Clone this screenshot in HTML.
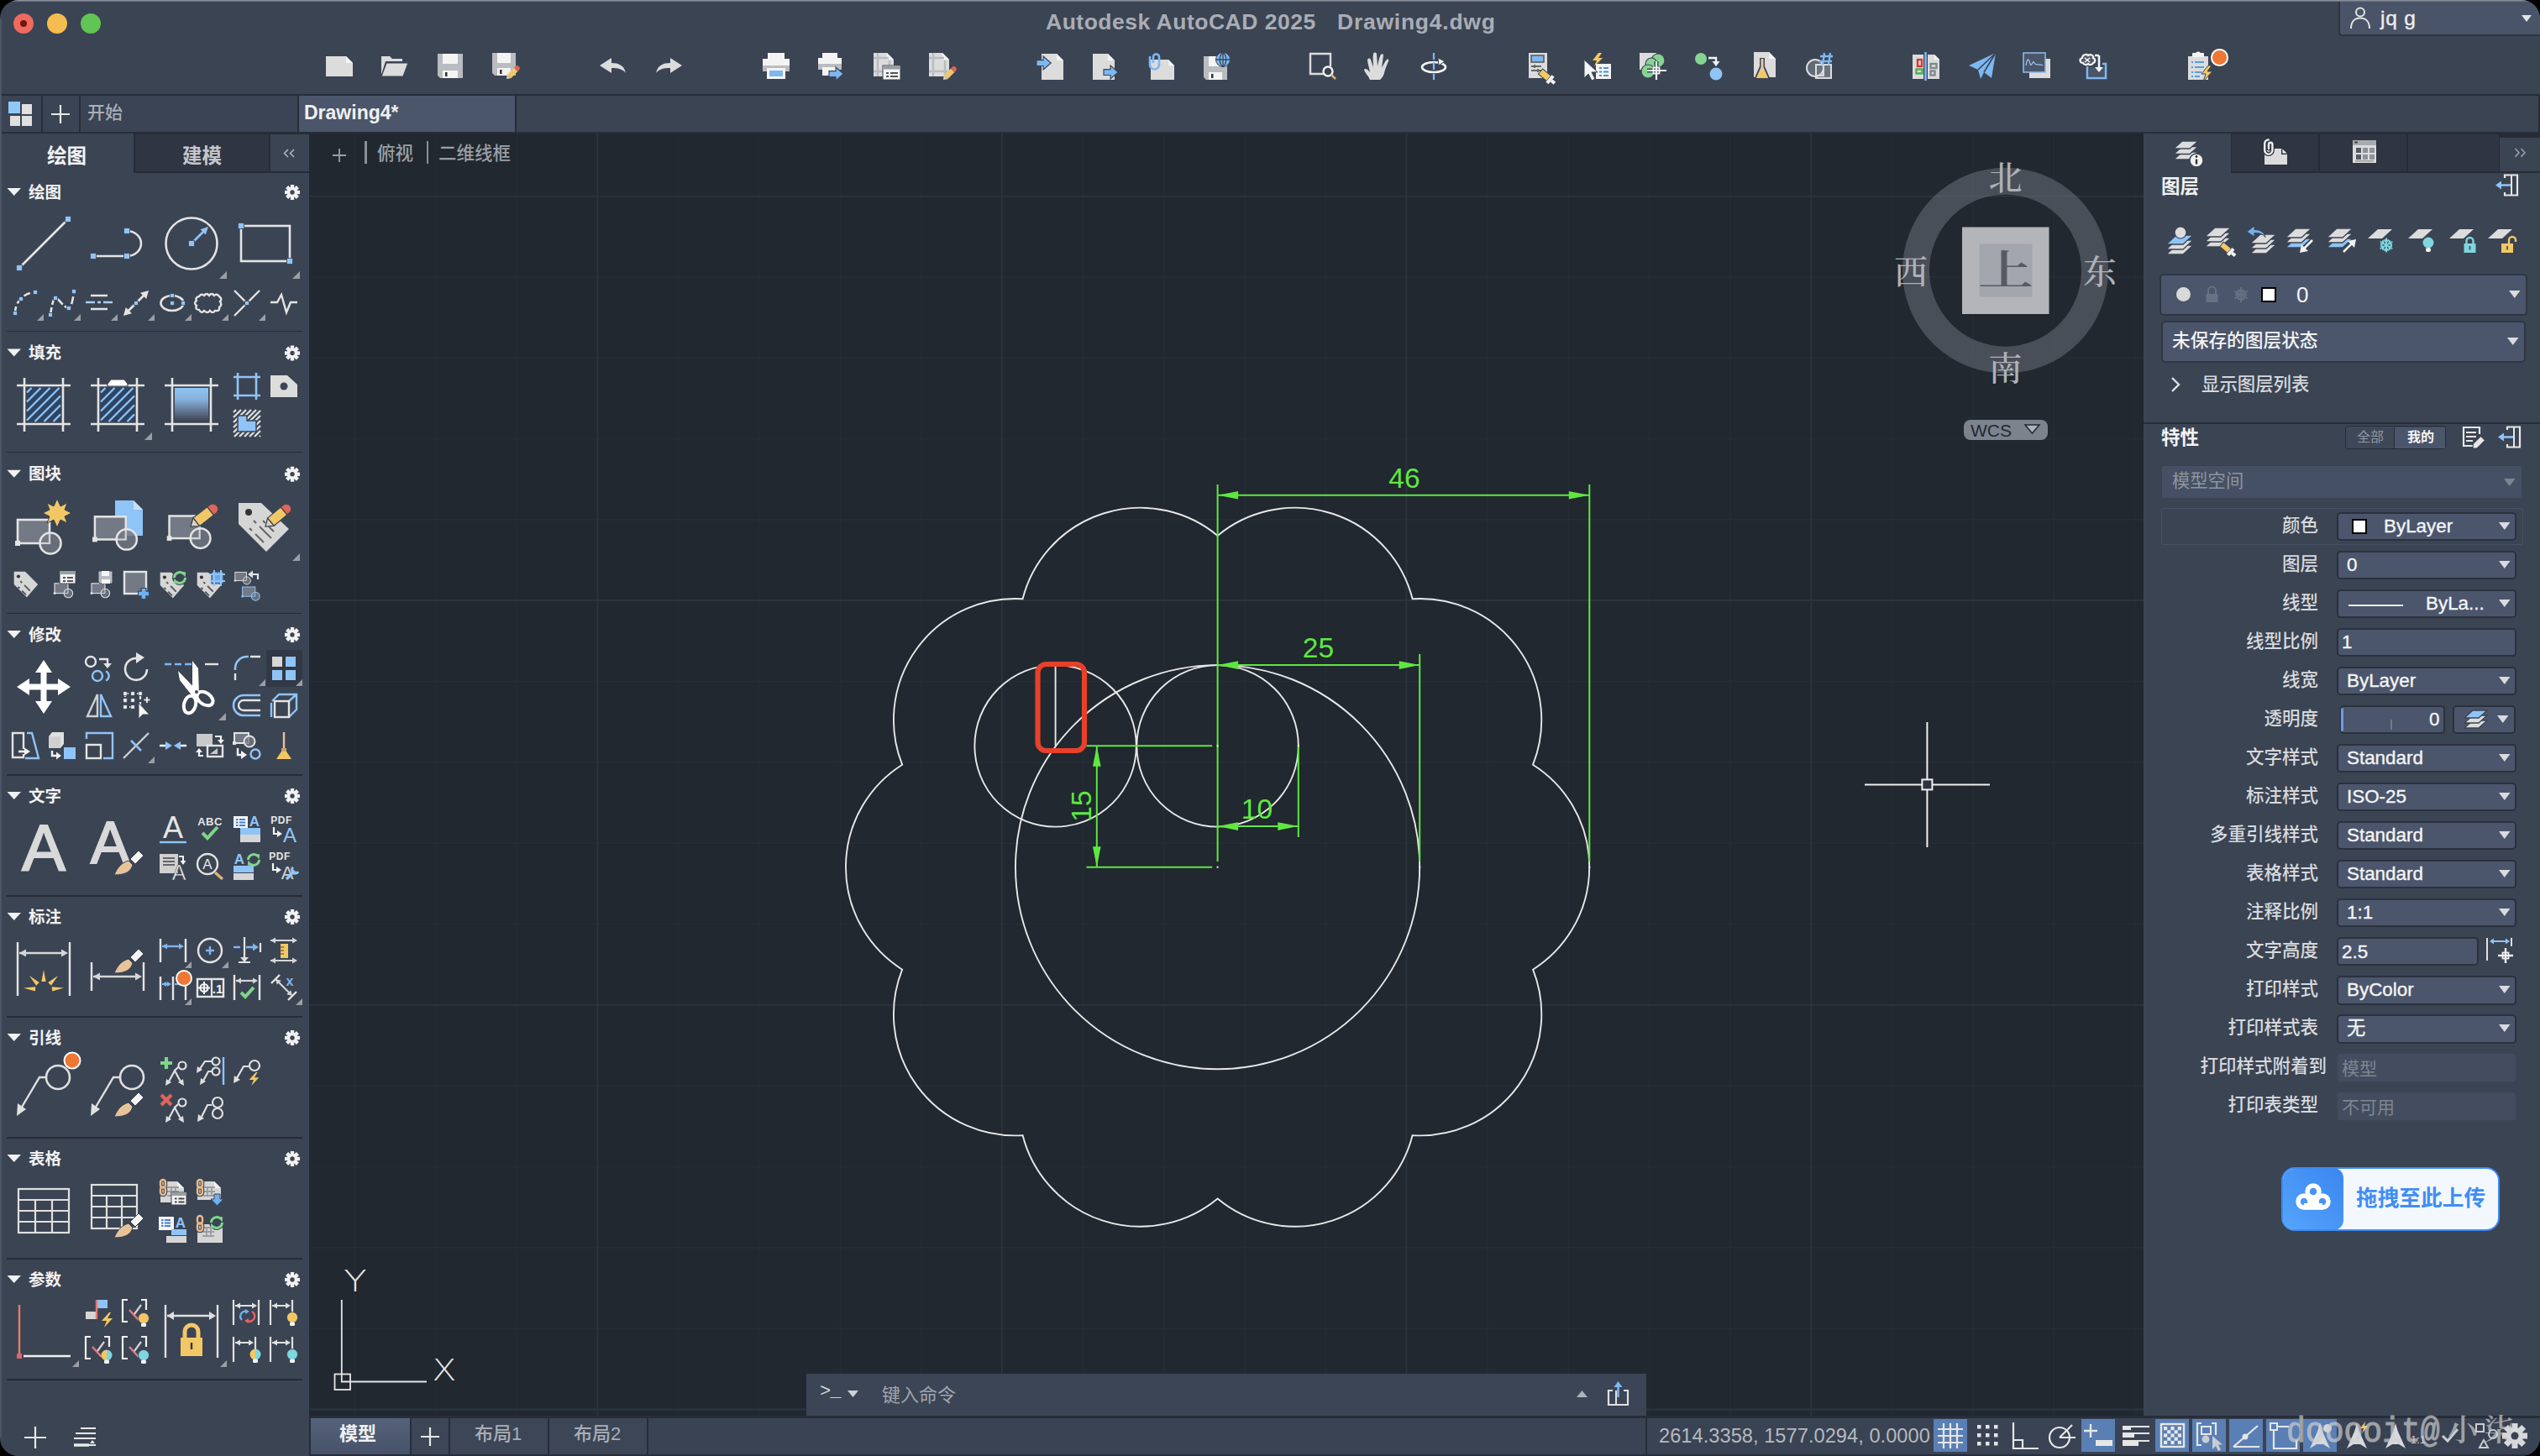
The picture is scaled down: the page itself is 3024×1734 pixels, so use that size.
<!DOCTYPE html>
<html lang="zh-CN"><head><meta charset="utf-8"><title>Autodesk AutoCAD 2025 - Drawing4.dwg</title>
<style>

*{box-sizing:border-box;margin:0;padding:0}
html,body{width:3024px;height:1734px;overflow:hidden;background:#000}
body{font-family:"Liberation Sans","Noto Sans CJK SC",sans-serif;color:#e4e4e4;font-size:26px}
#win{position:absolute;left:0;top:0;width:3024px;height:1734px;background:#3b4453;border-radius:22px;overflow:hidden}
.abs{position:absolute}
svg{position:absolute;overflow:visible}
.t{position:absolute;white-space:nowrap;line-height:1}

</style></head>
<body>
<div id="win">
<div class="abs" style="left:16px;top:16px;width:24px;height:24px;border-radius:50%;background:#ee6a5f"></div><div class="abs" style="left:24px;top:24px;width:8px;height:8px;border-radius:50%;background:#7a120c"></div>
<div class="abs" style="left:56px;top:16px;width:24px;height:24px;border-radius:50%;background:#f5bd4f"></div>
<div class="abs" style="left:96px;top:16px;width:24px;height:24px;border-radius:50%;background:#61c454"></div>
<div class="t" style="left:1245px;top:13px;font-size:26.500px;letter-spacing:.5px;font-weight:bold;color:#a9adb5">Autodesk AutoCAD 2025</div>
<div class="t" style="left:1592px;top:13px;font-size:26.500px;letter-spacing:.75px;font-weight:bold;color:#a9adb5">Drawing4.dwg</div>
<div class="abs" style="left:2784px;top:0;width:240px;height:43px;background:#4a5469;border-left:2px solid #2e3542;border-bottom:2px solid #2e3542;border-bottom-left-radius:4px"></div>
<svg style="left:2796px;top:6px" width="30" height="30"><circle cx="14" cy="8.500" r="5" fill="none" stroke="#e4e4e4" stroke-width="2"/><path d="M3,28 c0,-9 5,-12.500 11,-12.500 c6,0 11,3.500 11,12.500" fill="none" stroke="#e4e4e4" stroke-width="2"/></svg>
<div class="t" style="left:2834px;top:10px;font-size:24.500px;color:#ececec;letter-spacing:.8px;-webkit-text-stroke:.4px #ececec">jq g</div>
<svg style="left:3002px;top:18px" width="14" height="10"><path d="M0,0 h12 l-6,8 Z" fill="#e4e4e4"/></svg>
<svg style="left:386px;top:61px" width="36" height="36" viewBox="0 0 36 36"><path d="M2,6 h24 l8,8 v16 h-32 Z" fill="#dcdcdc"/><path d="M26,6 v8 h8 Z" fill="#f4f4f4"/></svg>
<svg style="left:452px;top:61px" width="36" height="36" viewBox="0 0 36 36"><path d="M2,6 h10 l3,3 h12 v3 h-20 l-5,16 Z" fill="#dcdcdc"/><path d="M8,14 h26 l-6,16 h-26 Z" fill="#dcdcdc" stroke="#3b4453" stroke-width="1.2"/></svg>
<svg style="left:518px;top:61px" width="36" height="36" viewBox="0 0 36 36"><path d="M3,3 h30 v29 h-27 l-3,-3 Z" fill="#b9bcc0"/><rect x="9" y="3" width="18" height="12" fill="#f4f4f4"/><rect x="9" y="23" width="18" height="9" fill="#f4f4f4"/><rect x="12" y="25" width="2.5" height="5" fill="#333"/></svg>
<svg style="left:584px;top:61px" width="36" height="36" viewBox="0 0 36 36"><path d="M2,2 h28 v27 h-25 l-3,-3 Z" fill="#b9bcc0"/><rect x="8" y="2" width="16" height="12" fill="#f4f4f4"/><rect x="8" y="20" width="16" height="9" fill="#f4f4f4"/><rect x="11" y="22" width="2.5" height="5" fill="#333"/><g transform="translate(19,33) scale(1.05) rotate(-45)"><path d="M0,0 L4,-3 L4,3 Z" fill="#d9d2c4"/><rect x="4" y="-3" width="11" height="6" fill="#f2c867"/><path d="M15,-3 h2 a3,3 0 0 1 0,6 h-2 Z" fill="#e0645a"/></g></svg>
<svg style="left:712px;top:61px" width="36" height="36" viewBox="0 0 36 36"><path d="M2,17 l14,-9 v6 c9,0 15,3 17,12 c-4,-5 -9,-6 -17,-6 v6 Z" fill="#dcdcdc"/></svg>
<svg style="left:778px;top:61px" width="36" height="36" viewBox="0 0 36 36"><path transform="translate(36,0) scale(-1,1)" d="M2,17 l14,-9 v6 c9,0 15,3 17,12 c-4,-5 -9,-6 -17,-6 v6 Z" fill="#dcdcdc"/></svg>
<svg style="left:906px;top:61px" width="36" height="36" viewBox="0 0 36 36"><rect x="8" y="2" width="20" height="10" fill="#f4f4f4"/><path d="M2,9 h32 v10 h-32 Z" fill="#f4f4f4"/><rect x="2" y="17" width="32" height="7" fill="#b9bcc0"/><rect x="7" y="20" width="22" height="13" fill="#f4f4f4"/><rect x="10" y="23" width="16" height="7" fill="#7db8f2"/></svg>
<svg style="left:972px;top:61px" width="36" height="36" viewBox="0 0 36 36"><rect x="7" y="2" width="18" height="9" fill="#f4f4f4"/><path d="M2,8 h28 v9 h-28 Z" fill="#f4f4f4"/><rect x="2" y="15" width="28" height="7" fill="#b9bcc0"/><rect x="7" y="19" width="18" height="10" fill="#f4f4f4"/><path transform="translate(15,27) scale(1.15)" d="M0,-3 h7 v-4 l8,7 l-8,7 v-4 h-7 Z" fill="#7db8f2" stroke="#3b4453" stroke-width="1"/></svg>
<svg style="left:1038px;top:61px" width="36" height="36" viewBox="0 0 36 36"><path d="M2,2 h16 l8,8 v20 h-24 Z" fill="#dcdcdc"/><path d="M18,2 v8 h8 Z" fill="#f4f4f4"/><path d="M7,2 v28 M2,8 h18 M2,24 h24 M21,11 v19" stroke="#b9bcc0" stroke-width="2.4" fill="none"/><rect x="13" y="17" width="21" height="17" fill="#f4f4f4" stroke="#3b4453" stroke-width="1"/><rect x="13.5" y="17.5" width="20" height="4" fill="#9a9da3"/><path d="M17,26 h3 M22,26 h9 M17,30 h3 M22,30 h9" stroke="#555" stroke-width="2"/></svg>
<svg style="left:1104px;top:61px" width="36" height="36" viewBox="0 0 36 36"><path d="M2,2 h16 l8,8 v20 h-24 Z" fill="#dcdcdc"/><path d="M18,2 v8 h8 Z" fill="#f4f4f4"/><path d="M7,2 v28 M2,8 h18 M2,24 h24 M21,11 v19" stroke="#b9bcc0" stroke-width="2.4" fill="none"/><g transform="translate(19,34) scale(1.05) rotate(-45)"><path d="M0,0 L4,-3 L4,3 Z" fill="#d9d2c4"/><rect x="4" y="-3" width="11" height="6" fill="#f2c867"/><path d="M15,-3 h2 a3,3 0 0 1 0,6 h-2 Z" fill="#e0645a"/></g></svg>
<svg style="left:1232px;top:61px" width="36" height="36" viewBox="0 0 36 36"><path d="M8,3 h18 l8,8 v23 h-26 Z" fill="#dcdcdc"/><path d="M26,3 v8 h8 Z" fill="#f4f4f4"/><path transform="translate(2,14) scale(1.15)" d="M0,-3 h7 v-4 l8,7 l-8,7 v-4 h-7 Z" fill="#7db8f2" stroke="#3b4453" stroke-width="1"/></svg>
<svg style="left:1298px;top:61px" width="36" height="36" viewBox="0 0 36 36"><path d="M3,3 h18 l8,8 v23 h-26 Z" fill="#dcdcdc"/><path d="M21,3 v8 h8 Z" fill="#f4f4f4"/><path transform="translate(16,25) scale(1.15)" d="M0,-3 h7 v-4 l8,7 l-8,7 v-4 h-7 Z" fill="#7db8f2" stroke="#3b4453" stroke-width="1"/></svg>
<svg style="left:1364px;top:61px" width="36" height="36" viewBox="0 0 36 36"><path d="M6,10 h21 l7,7 v17 h-28 Z" fill="#dcdcdc"/><path d="M27,10 v7 h7 Z" fill="#f4f4f4"/><path d="M9,13 v-6 a3.5,3.500 0 0 1 7,0 v9 a5.5,5.500 0 0 1 -11,0 v-9 a0,0 0 0 1 0,0" fill="none" stroke="#7db8f2" stroke-width="2.6" stroke-linecap="round"/></svg>
<svg style="left:1430px;top:61px" width="36" height="36" viewBox="0 0 36 36"><path d="M3,6 h28 v28 h-25 l-3,-3 Z" fill="#b9bcc0"/><rect x="9" y="6" width="16" height="12" fill="#f4f4f4"/><rect x="9" y="25" width="16" height="9" fill="#f4f4f4"/><rect x="12" y="27" width="2.5" height="5" fill="#333"/><circle cx="26" cy="10" r="8.5" fill="#7db8f2" stroke="#3b4453" stroke-width="1"/><path d="M17.500,10 h17 M26,1.500 v17 M26,1.500 c-5,4 -5,13 0,17 M26,1.500 c5,4 5,13 0,17" stroke="#3b4453" stroke-width="1.3" fill="none"/></svg>
<svg style="left:1557px;top:61px" width="36" height="36" viewBox="0 0 36 36"><path d="M19,27 h-16 v-24 h24 v15" fill="none" stroke="#dcdcdc" stroke-width="2.4"/><circle cx="24" cy="24" r="5.5" fill="none" stroke="#f4f4f4" stroke-width="2.4"/><path d="M28,28 l5,5" stroke="#d9b27a" stroke-width="2.6"/></svg>
<svg style="left:1623px;top:61px" width="36" height="36" viewBox="0 0 36 36"><path d="M8,34 c-2,-5 -6,-8 -7,-12 c1,-2 4,-1 6,2 l1,1 c-1,-6 -3,-11 -3,-15 c1,-2 3,-2 4,0 l3,9 c0,-6 -1,-12 0,-16 c1,-2 3,-2 4,0 l1,15 c1,-5 2,-11 4,-14 c1,-1 3,-1 3,1 l-2,15 c2,-4 4,-8 6,-10 c2,-1 3,0 2,2 c-2,5 -4,9 -5,14 c-1,4 -3,6 -5,8 Z" fill="#dcdcdc"/></svg>
<svg style="left:1690px;top:61px" width="36" height="36" viewBox="0 0 36 36"><ellipse cx="17" cy="19" rx="14" ry="6" fill="none" stroke="#f4f4f4" stroke-width="2.6"/><path d="M17,2 v8 M17,13 v9 M17,27 v7" stroke="#7db8f2" stroke-width="2.2"/><path d="M22,8 l8,4 l-7,5 Z" fill="#f4f4f4" stroke="#3b4453" stroke-width="1"/></svg>
<svg style="left:1818px;top:61px" width="36" height="36" viewBox="0 0 36 36"><rect x="2" y="2" width="22" height="30" fill="#dcdcdc"/><rect x="5" y="5" width="15" height="8" fill="#7db8f2" stroke="#555" stroke-width="1.5"/><path d="M5,18 h12 M5,23 h12 M9,16 v4 M13,21 v4" stroke="#666" stroke-width="1.8"/><g transform="translate(16,24) rotate(40)"><rect x="0" y="-4" width="13" height="8" fill="#f2c867" stroke="#3b4453" stroke-width="1"/><rect x="13" y="-5.500" width="4" height="11" fill="#f4f4f4"/><rect x="17" y="-2" width="5" height="4" fill="#f4f4f4"/></g></svg>
<svg style="left:1884px;top:61px" width="36" height="36" viewBox="0 0 36 36"><rect x="16" y="15" width="18" height="18" fill="#f4f4f4"/><path d="M20,20 h3 M25,20 h6 M20,24.500 h3 M25,24.500 h6 M20,29 h3 M25,29 h6" stroke="#4f8fd6" stroke-width="2.2"/><path d="M19,2 l-7,9 h5 l-3,7 l10,-10 h-5 l4,-6 Z" fill="#f2c867"/><path d="M2,10 l0,22 l5,-5 l4,8 l4,-2 l-4,-8 h7 Z" fill="#f4f4f4" stroke="#3b4453" stroke-width="1"/></svg>
<svg style="left:1950px;top:61px" width="36" height="36" viewBox="0 0 36 36"><rect x="2" y="2" width="20" height="20" fill="#dcdcdc"/><circle cx="24" cy="11" r="8" fill="#86d493" stroke="#3b4453" stroke-width="1.2"/><circle cx="16" cy="15" r="7" fill="#86d493" stroke="#3b4453" stroke-width="1.2"/><circle cx="12" cy="24" r="8" fill="#86d493" stroke="#3b4453" stroke-width="1.2"/><path d="M22,12 v22 M11,23 h23" stroke="#3b4453" stroke-width="5"/><path d="M22,12 v22 M11,23 h23" stroke="#f4f4f4" stroke-width="2.2"/><rect x="18.500" y="19.500" width="7" height="7" fill="none" stroke="#f4f4f4" stroke-width="1.8"/></svg>
<svg style="left:2016px;top:61px" width="36" height="36" viewBox="0 0 36 36"><circle cx="9" cy="9" r="7" fill="#86d493"/><circle cx="27" cy="27" r="7.500" fill="#8fc4f7"/><path d="M18,8 h9 v6" fill="none" stroke="#f4f4f4" stroke-width="2.4"/><path d="M22.500,12 h9 l-4.500,6 Z" fill="#f4f4f4"/></svg>
<svg style="left:2082px;top:61px" width="36" height="36" viewBox="0 0 36 36"><path d="M6,1 h18 l8,8 v22 h-26 Z" fill="#dcdcdc"/><path d="M24,1 v8 h8 Z" fill="#f4f4f4"/><path d="M13,8 h6 v10 l7,16 h-20 l7,-16 Z" fill="#3b4453"/><path d="M14.500,9 h3 v10 l5.500,13 h-14 l5.500,-13 Z" fill="#e8c99c"/><path d="M12.500,24 h7 l3.500,8 h-14 Z" fill="#f2c867"/></svg>
<svg style="left:2148px;top:61px" width="36" height="36" viewBox="0 0 36 36"><rect x="14" y="16" width="18" height="16" fill="#6d7480" stroke="#dcdcdc" stroke-width="2"/><circle cx="13" cy="20" r="10" fill="#6d7480" fill-opacity=".8" stroke="#dcdcdc" stroke-width="2"/><rect x="14" y="16" width="9" height="13" fill="none" stroke="#dcdcdc" stroke-width="2"/><path d="M24,2 l-2,14 M31,2 l-2,14 M19,6 h15 M18,12 h15" stroke="#7db8f2" stroke-width="2.4"/></svg>
<svg style="left:2275px;top:61px" width="36" height="36" viewBox="0 0 36 36"><rect x="2" y="4" width="13" height="29" fill="#dcdcdc"/><path d="M20,4 h8 l6,6 v23 h-14 Z" fill="#dcdcdc"/><path d="M28,4 v6 h6 Z" fill="#f4f4f4"/><path d="M17.500,1 v34" stroke="#7db8f2" stroke-width="2.6"/><rect x="8" y="10" width="5" height="8" fill="none" stroke="#d9362e" stroke-width="2.400"/><rect x="6.500" y="21.500" width="7" height="5" fill="none" stroke="#4fae4f" stroke-width="2.400"/><rect x="23.500" y="15" width="7" height="5" fill="none" stroke="#85888c" stroke-width="2.400"/><rect x="23.500" y="23.500" width="5" height="5" fill="none" stroke="#85888c" stroke-width="2.400"/></svg>
<svg style="left:2342px;top:61px" width="36" height="36" viewBox="0 0 36 36"><path d="M2,17 l32,-15 l-5,30 l-9,-7 l-4,8 l-3,-11 Z" fill="#7db8f2"/><path d="M34,2 l-21,20 M34,2 l-14,23" stroke="#3b4453" stroke-width="1.6" fill="none"/></svg>
<svg style="left:2407px;top:61px" width="36" height="36" viewBox="0 0 36 36"><rect x="9" y="9" width="25" height="23" fill="#dcdcdc"/><rect x="2" y="2" width="26" height="23" fill="#4a566a" stroke="#8fb7e6" stroke-width="1.600"/><path d="M5,17 c2,-12 4,-6 5,-2 c2,5 3,-6 5,-1 c2,4 6,0 10,3" fill="none" stroke="#9cc3ee" stroke-width="1.300"/></svg>
<svg style="left:2474px;top:61px" width="36" height="36" viewBox="0 0 36 36"><path d="M11,18 v14 h22 v-17 h-4" fill="none" stroke="#7db8f2" stroke-width="2.600"/><path d="M13,19 h18 v11 h-18 Z" fill="#4a5568"/><path d="M25,5 v17 M20,5 h5" stroke="#f4f4f4" stroke-width="2.600" fill="none"/><path d="M20,19 h10 l-5,6 Z" fill="#f4f4f4"/><path d="M6,14 c-4,0 -5,-5 -1,-6 c0,-4 5,-5 7,-3 c3,-2 7,0 6,3 c3,1 3,5 0,6 c-1,2 -4,3 -6,1 c-2,2 -5,1 -6,-1 Z" fill="#555d6c" stroke="#f4f4f4" stroke-width="2.200"/><path d="M8,8 l6,5 M14,8 l-6,5" stroke="#f4f4f4" stroke-width="1.600"/></svg>
<svg style="left:2603px;top:61px" width="36" height="36" viewBox="0 0 36 36"><rect x="2" y="6" width="24" height="28" fill="#dcdcdc"/><path d="M8,6 v-3 h3 a3,2.500 0 0 1 6,0 h3 v3 Z" fill="#f4f4f4"/><rect x="7" y="2" width="14" height="5" rx="1" fill="#f4f4f4"/><path d="M6,13 h2 M10,13 h11 M6,19 h2 M10,19 h11 M6,25 h2 M10,25 h8 M6,30 h2 M10,30 h6" stroke="#5b9be0" stroke-width="2.200"/><path d="M26,17 l-8,10 h5 l-3,9 l11,-12 h-6 l5,-7 Z" fill="#f2c867" stroke="#3b4453" stroke-width="1"/></svg>
<div class="abs" style="left:2632px;top:58px;width:20.500px;height:20.500px;border-radius:50%;background:#ee7733;border:2px solid #fff"></div>
<div class="abs" style="left:0;top:112px;width:3024px;height:47px;background:#272d39"></div>
<div class="abs" style="left:2px;top:114px;width:47px;height:43px;background:#3b4454"></div>
<div class="abs" style="left:51px;top:114px;width:43px;height:43px;background:#3b4454"></div>
<div class="abs" style="left:96px;top:114px;width:258px;height:43px;background:#3b4454"></div>
<div class="abs" style="left:356px;top:114px;width:257px;height:43px;background:#4b566b"></div>
<div class="abs" style="left:615px;top:114px;width:2407px;height:43px;background:#3b4453"></div>
<svg style="left:10px;top:121px" width="30" height="30"><rect x="0" y="0" width="14" height="14" fill="#8fc8f8"/><rect x="16" y="3" width="12" height="12" fill="#e0e0e0"/><rect x="2" y="17" width="12" height="12" fill="#e0e0e0"/><rect x="16" y="17" width="12" height="12" fill="#e0e0e0"/></svg>
<svg style="left:61px;top:125px" width="24" height="24"><path d="M11,0 v22 M0,11 h22" stroke="#e8e8e8" stroke-width="2.200"/></svg>
<div class="t" style="left:104px;top:123px;font-size:21px;color:#a9aeb6;font-weight:500">开始</div>
<div class="t" style="left:362px;top:122.500px;font-size:23px;color:#f0f0f0;font-weight:bold">Drawing4*</div>
<div class="abs" style="left:0;top:0;width:3024px;height:2px;background:linear-gradient(#989ea7,#5a6270)"></div>
<div class="abs" style="left:368px;top:159px;width:2184px;height:1528px;background:#212830;overflow:hidden">
<svg style="left:-368px;top:-159px" width="3024" height="1734" viewBox="0 0 3024 1734">
<path d="M422.2,159 V1687 M518.5,159 V1687 M614.9,159 V1687 M807.5,159 V1687 M903.9,159 V1687 M1000.2,159 V1687 M1096.5,159 V1687 M1289.2,159 V1687 M1385.5,159 V1687 M1481.8,159 V1687 M1578.2,159 V1687 M1770.8,159 V1687 M1867.2,159 V1687 M1963.5,159 V1687 M2059.8,159 V1687 M2252.5,159 V1687 M2348.8,159 V1687 M2445.1,159 V1687 M2541.5,159 V1687 M368,329.9 H2552 M368,426.3 H2552 M368,522.6 H2552 M368,618.9 H2552 M368,811.6 H2552 M368,907.9 H2552 M368,1004.2 H2552 M368,1100.6 H2552 M368,1293.2 H2552 M368,1389.6 H2552 M368,1485.9 H2552 M368,1582.2 H2552" stroke="#252c35" stroke-width="1.600" fill="none"/>
<path d="M711.2,159 V1687 M1192.8,159 V1687 M1674.5,159 V1687 M2156.2,159 V1687 M368,233.6 H2552 M368,715.2 H2552 M368,1196.9 H2552 M368,1678.5 H2552" stroke="#2c343e" stroke-width="1.800" fill="none"/>
<path d="M1449.60,637.92 A144.36,144.36 0 0 0 1217.56,713.32 A144.36,144.36 0 0 0 1074.15,910.71 A144.36,144.36 0 0 0 1074.15,1154.69 A144.36,144.36 0 0 0 1217.56,1352.08 A144.36,144.36 0 0 0 1449.60,1427.48 A144.36,144.36 0 0 0 1681.64,1352.08 A144.36,144.36 0 0 0 1825.05,1154.69 A144.36,144.36 0 0 0 1825.05,910.71 A144.36,144.36 0 0 0 1681.64,713.32 A144.36,144.36 0 0 0 1449.60,637.92 " fill="none" stroke="#e8e8e8" stroke-width="1.9"/>
<circle cx="1449.6" cy="1032.7" r="240.60" fill="none" stroke="#e8e8e8" stroke-width="1.900"/>
<circle cx="1449.6" cy="888.34" r="96.24" fill="none" stroke="#e8e8e8" stroke-width="1.900"/>
<circle cx="1256.6" cy="888.34" r="96.24" fill="none" stroke="#e8e8e8" stroke-width="1.900"/>
<path d="M1256.6,792.1 V888.3" stroke="#e8e8e8" stroke-width="1.900"/>
<path d="M1449.6,577 V1026 M1892.3,577 V1026 M1449.6,589.7 H1892.3 M1690.2,779 V1026 M1449.6,792.1 H1690.2 M1545.8,888.3 V997 M1449.6,984.1 H1545.8 M1293.4,888.3 H1443.2 M1293.4,1032.7 H1443.2 M1305.8,888.3 V1032.7" stroke="#5ee83f" stroke-width="2" fill="none"/>
<path d="M1449.6,589.7 L1474.1,584.9 L1474.1,594.5 Z" fill="#5ee83f"/>
<path d="M1892.3,589.7 L1867.8,594.5 L1867.8,584.9 Z" fill="#5ee83f"/>
<path d="M1449.6,792.1 L1474.1,787.3 L1474.1,796.9 Z" fill="#5ee83f"/>
<path d="M1690.2,792.1 L1665.7,796.9 L1665.7,787.3 Z" fill="#5ee83f"/>
<path d="M1449.6,984.1 L1474.1,979.3 L1474.1,988.9 Z" fill="#5ee83f"/>
<path d="M1545.8,984.1 L1521.3,988.9 L1521.3,979.3 Z" fill="#5ee83f"/>
<path d="M1305.8,888.3 L1310.6,912.8 L1301.0,912.8 Z" fill="#5ee83f"/>
<path d="M1305.8,1032.7 L1301.0,1008.2 L1310.6,1008.2 Z" fill="#5ee83f"/>
<text x="1672" y="580.500" font-family="Liberation Sans, sans-serif" font-size="33.500" fill="#5ee83f" text-anchor="middle">46</text>
<text x="1569.500" y="782.500" font-family="Liberation Sans, sans-serif" font-size="33.500" fill="#5ee83f" text-anchor="middle">25</text>
<text x="1496.500" y="974.500" font-family="Liberation Sans, sans-serif" font-size="33.500" fill="#5ee83f" text-anchor="middle">10</text>
<text transform="translate(1298.500,960) rotate(-90)" x="0" y="0" font-family="Liberation Sans, sans-serif" font-size="33.500" fill="#5ee83f" text-anchor="middle">15</text>
<rect x="1448.6" y="887.3" width="2" height="2" fill="#f0f0f0"/>
<rect x="1448.6" y="1031.7" width="2" height="2" fill="#f0f0f0"/>
<rect x="1544.8" y="887.3" width="2" height="2" fill="#f0f0f0"/>
<rect x="1689.2" y="1031.7" width="2" height="2" fill="#f0f0f0"/>
<rect x="1891.3" y="1031.7" width="2" height="2" fill="#f0f0f0"/>
<rect x="1235.500" y="791" width="55.500" height="103" rx="10" fill="none" stroke="#e8402a" stroke-width="6.200"/>
<path d="M2220,934.400 H2288 M2301,934.400 H2369 M2294.400,860 V928 M2294.400,941 V1009" stroke="#f0f0f0" stroke-width="2"/>
<rect x="2288.400" y="928.400" width="12" height="12" fill="#2d333c" stroke="#f0f0f0" stroke-width="2"/>
<circle cx="2387.500" cy="322.200" r="106.500" fill="none" stroke="#7d828c" stroke-opacity=".44" stroke-width="32"/>
<rect x="2336" y="270.500" width="103.500" height="103.500" fill="#b3b5b8"/>
<rect x="2356.500" y="290.500" width="63" height="63" fill="#a2a6ad"/>
<text x="2387.500" y="226" font-family="Noto Serif CJK SC, serif" font-size="40" font-weight="500" fill="#aeb2b8" text-anchor="middle">北</text>
<text x="2387.500" y="453" font-family="Noto Serif CJK SC, serif" font-size="40" font-weight="500" fill="#aeb2b8" text-anchor="middle">南</text>
<text x="2275" y="338" font-family="Noto Serif CJK SC, serif" font-size="40" font-weight="500" fill="#aeb2b8" text-anchor="middle">西</text>
<text x="2500" y="338" font-family="Noto Serif CJK SC, serif" font-size="40" font-weight="500" fill="#aeb2b8" text-anchor="middle">东</text>
<text transform="translate(2388,339) scale(1.18,0.88)" x="0" y="0" font-family="Noto Serif CJK SC, serif" font-size="56" font-weight="600" fill="#555a63" text-anchor="middle">上</text>
<rect x="2338" y="500" width="100" height="24" rx="8" fill="#7c838d"/>
<text x="2346" y="520" font-family="Liberation Sans, sans-serif" font-size="21" fill="#222831">WCS</text>
<path d="M2411,506 h17 l-8.500,10 Z" fill="#aeb4bc" stroke="#222831" stroke-width="1.500"/>
<path d="M406.800,1548 V1645.500 H508" fill="none" stroke="#e6e6e6" stroke-width="1.800"/>
<rect x="398.500" y="1636.500" width="18.500" height="18.500" fill="none" stroke="#e6e6e6" stroke-width="1.800"/>
<text transform="translate(423,1537.500) scale(1.28,1)" x="0" y="0" font-family="DejaVu Sans Light, DejaVu Sans, Liberation Sans, sans-serif" font-size="35" fill="#e6e6e6" text-anchor="middle" font-weight="200">Y</text>
<text transform="translate(529,1643.800) scale(1.22,1)" x="0" y="0" font-family="DejaVu Sans Light, DejaVu Sans, Liberation Sans, sans-serif" font-size="35" fill="#e6e6e6" text-anchor="middle" font-weight="200">X</text>
</svg>
<svg style="left:28px;top:18px" width="16" height="16"><path d="M8,0 v16 M0,8 h16" stroke="#9a9fa6" stroke-width="1.800"/></svg>
<div class="abs" style="left:66px;top:9px;width:2.500px;height:27px;background:#8b9097"></div>
<div class="abs" style="left:139.500px;top:9px;width:2.500px;height:27px;background:#8b9097"></div>
<div class="t" style="left:81px;top:14px;font-size:21.500px;color:#9a9fa6;font-weight:500">俯视</div>
<div class="t" style="left:154px;top:14px;font-size:21.500px;color:#9a9fa6;font-weight:500">二维线框</div>
<div class="abs" style="left:592px;top:1477px;width:1000px;height:51px;background:#3b4555"></div>
<div class="t" style="left:608px;top:1488px;font-size:22px;color:#cfd2d6;font-family:'Liberation Mono',monospace;letter-spacing:-1px">&gt;_</div>
<svg style="left:641px;top:1497px" width="14" height="9"><path d="M0,0 h13 l-6.500,8 Z" fill="#cfd2d6"/></svg>
<div class="t" style="left:682px;top:1491.500px;font-size:22px;color:#a0a5ad">键入命令</div>
<svg style="left:1509px;top:1496px" width="14" height="10"><path d="M0,9 h13 l-6.500,-8 Z" fill="#aeb3ba"/></svg>
<svg style="left:1545px;top:1485px" width="28" height="32"><path d="M7,12 h-5 v17 h23 v-17 h-5" fill="none" stroke="#e0e0e0" stroke-width="2.200"/><path d="M11,12 v17" stroke="#e0e0e0" stroke-width="2"/><path d="M13.500,20 v-13" stroke="#7db8f2" stroke-width="2.500"/><path d="M8.500,8 h10 l-5,-7 Z" fill="#7db8f2"/></svg>
</div>
<div class="abs" style="left:0;top:159px;width:368px;height:1575px;background:#3b4453"></div>
<div class="abs" style="left:0;top:22px;width:1.500px;height:1690px;background:#4c5565"></div>
<div class="abs" style="left:159px;top:159px;width:209px;height:47px;background:#262c37"></div>
<div class="abs" style="left:161px;top:160px;width:159px;height:44px;background:#2f3542"></div>
<div class="abs" style="left:322px;top:160px;width:46px;height:44px;background:#3b4453"></div>
<div class="t" style="left:56px;top:175px;font-size:23.500px;font-weight:bold;color:#f2f2f2">绘图</div>
<div class="t" style="left:217px;top:175px;font-size:23.500px;font-weight:bold;color:#c3c6cb">建模</div>
<svg style="left:337px;top:177px" width="16" height="12"><path d="M6,1 l-4.500,4.500 l4.500,4.500 M13,1 l-4.500,4.500 l4.500,4.500" fill="none" stroke="#b0b5bc" stroke-width="1.600"/></svg>
<div class="t" style="left:34px;top:219.7px;font-size:19.500px;font-weight:bold;color:#f2f2f2">绘图</div>
<div class="t" style="left:34px;top:411.2px;font-size:19.500px;font-weight:bold;color:#f2f2f2">填充</div>
<div class="t" style="left:34px;top:555.4px;font-size:19.500px;font-weight:bold;color:#f2f2f2">图块</div>
<div class="t" style="left:34px;top:746.7px;font-size:19.500px;font-weight:bold;color:#f2f2f2">修改</div>
<div class="t" style="left:34px;top:938.7px;font-size:19.500px;font-weight:bold;color:#f2f2f2">文字</div>
<div class="t" style="left:34px;top:1082.7px;font-size:19.500px;font-weight:bold;color:#f2f2f2">标注</div>
<div class="t" style="left:34px;top:1226.7px;font-size:19.500px;font-weight:bold;color:#f2f2f2">引线</div>
<div class="t" style="left:34px;top:1370.7px;font-size:19.500px;font-weight:bold;color:#f2f2f2">表格</div>
<div class="t" style="left:34px;top:1514.7px;font-size:19.500px;font-weight:bold;color:#f2f2f2">参数</div>
<div class="abs" style="left:8px;top:393.6px;width:352px;height:1.800px;background:#272d37"></div>
<div class="abs" style="left:8px;top:537.7px;width:352px;height:1.800px;background:#272d37"></div>
<div class="abs" style="left:8px;top:729.6px;width:352px;height:1.800px;background:#272d37"></div>
<div class="abs" style="left:8px;top:922.1px;width:352px;height:1.800px;background:#272d37"></div>
<div class="abs" style="left:8px;top:1066.1px;width:352px;height:1.800px;background:#272d37"></div>
<div class="abs" style="left:8px;top:1210.1px;width:352px;height:1.800px;background:#272d37"></div>
<div class="abs" style="left:8px;top:1354.1px;width:352px;height:1.800px;background:#272d37"></div>
<div class="abs" style="left:8px;top:1498.1px;width:352px;height:1.800px;background:#272d37"></div>
<div class="abs" style="left:8px;top:1642.1px;width:352px;height:1.800px;background:#272d37"></div>
<svg style="left:0;top:0" width="368" height="1734" viewBox="0 0 368 1734">
<path d="M8.500,224 h16.500 l-8.250,9 Z" fill="#f2f2f2"/>
<g transform="translate(348,229) scale(0.95)"><rect x="-2.300" y="-9.500" width="4.600" height="5" fill="#f2f2f2" transform="rotate(0)"/><rect x="-2.300" y="-9.500" width="4.600" height="5" fill="#f2f2f2" transform="rotate(45)"/><rect x="-2.300" y="-9.500" width="4.600" height="5" fill="#f2f2f2" transform="rotate(90)"/><rect x="-2.300" y="-9.500" width="4.600" height="5" fill="#f2f2f2" transform="rotate(135)"/><rect x="-2.300" y="-9.500" width="4.600" height="5" fill="#f2f2f2" transform="rotate(180)"/><rect x="-2.300" y="-9.500" width="4.600" height="5" fill="#f2f2f2" transform="rotate(225)"/><rect x="-2.300" y="-9.500" width="4.600" height="5" fill="#f2f2f2" transform="rotate(270)"/><rect x="-2.300" y="-9.500" width="4.600" height="5" fill="#f2f2f2" transform="rotate(315)"/><circle r="6.500" fill="#f2f2f2"/><circle r="2.800" fill="#3b4453"/></g>
<path d="M8.500,415.5 h16.500 l-8.250,9 Z" fill="#f2f2f2"/>
<g transform="translate(348,420.5) scale(0.95)"><rect x="-2.300" y="-9.500" width="4.600" height="5" fill="#f2f2f2" transform="rotate(0)"/><rect x="-2.300" y="-9.500" width="4.600" height="5" fill="#f2f2f2" transform="rotate(45)"/><rect x="-2.300" y="-9.500" width="4.600" height="5" fill="#f2f2f2" transform="rotate(90)"/><rect x="-2.300" y="-9.500" width="4.600" height="5" fill="#f2f2f2" transform="rotate(135)"/><rect x="-2.300" y="-9.500" width="4.600" height="5" fill="#f2f2f2" transform="rotate(180)"/><rect x="-2.300" y="-9.500" width="4.600" height="5" fill="#f2f2f2" transform="rotate(225)"/><rect x="-2.300" y="-9.500" width="4.600" height="5" fill="#f2f2f2" transform="rotate(270)"/><rect x="-2.300" y="-9.500" width="4.600" height="5" fill="#f2f2f2" transform="rotate(315)"/><circle r="6.500" fill="#f2f2f2"/><circle r="2.800" fill="#3b4453"/></g>
<path d="M8.500,559.7 h16.500 l-8.250,9 Z" fill="#f2f2f2"/>
<g transform="translate(348,564.7) scale(0.95)"><rect x="-2.300" y="-9.500" width="4.600" height="5" fill="#f2f2f2" transform="rotate(0)"/><rect x="-2.300" y="-9.500" width="4.600" height="5" fill="#f2f2f2" transform="rotate(45)"/><rect x="-2.300" y="-9.500" width="4.600" height="5" fill="#f2f2f2" transform="rotate(90)"/><rect x="-2.300" y="-9.500" width="4.600" height="5" fill="#f2f2f2" transform="rotate(135)"/><rect x="-2.300" y="-9.500" width="4.600" height="5" fill="#f2f2f2" transform="rotate(180)"/><rect x="-2.300" y="-9.500" width="4.600" height="5" fill="#f2f2f2" transform="rotate(225)"/><rect x="-2.300" y="-9.500" width="4.600" height="5" fill="#f2f2f2" transform="rotate(270)"/><rect x="-2.300" y="-9.500" width="4.600" height="5" fill="#f2f2f2" transform="rotate(315)"/><circle r="6.500" fill="#f2f2f2"/><circle r="2.800" fill="#3b4453"/></g>
<path d="M8.500,751 h16.500 l-8.250,9 Z" fill="#f2f2f2"/>
<g transform="translate(348,756) scale(0.95)"><rect x="-2.300" y="-9.500" width="4.600" height="5" fill="#f2f2f2" transform="rotate(0)"/><rect x="-2.300" y="-9.500" width="4.600" height="5" fill="#f2f2f2" transform="rotate(45)"/><rect x="-2.300" y="-9.500" width="4.600" height="5" fill="#f2f2f2" transform="rotate(90)"/><rect x="-2.300" y="-9.500" width="4.600" height="5" fill="#f2f2f2" transform="rotate(135)"/><rect x="-2.300" y="-9.500" width="4.600" height="5" fill="#f2f2f2" transform="rotate(180)"/><rect x="-2.300" y="-9.500" width="4.600" height="5" fill="#f2f2f2" transform="rotate(225)"/><rect x="-2.300" y="-9.500" width="4.600" height="5" fill="#f2f2f2" transform="rotate(270)"/><rect x="-2.300" y="-9.500" width="4.600" height="5" fill="#f2f2f2" transform="rotate(315)"/><circle r="6.500" fill="#f2f2f2"/><circle r="2.800" fill="#3b4453"/></g>
<path d="M8.500,943 h16.500 l-8.250,9 Z" fill="#f2f2f2"/>
<g transform="translate(348,948) scale(0.95)"><rect x="-2.300" y="-9.500" width="4.600" height="5" fill="#f2f2f2" transform="rotate(0)"/><rect x="-2.300" y="-9.500" width="4.600" height="5" fill="#f2f2f2" transform="rotate(45)"/><rect x="-2.300" y="-9.500" width="4.600" height="5" fill="#f2f2f2" transform="rotate(90)"/><rect x="-2.300" y="-9.500" width="4.600" height="5" fill="#f2f2f2" transform="rotate(135)"/><rect x="-2.300" y="-9.500" width="4.600" height="5" fill="#f2f2f2" transform="rotate(180)"/><rect x="-2.300" y="-9.500" width="4.600" height="5" fill="#f2f2f2" transform="rotate(225)"/><rect x="-2.300" y="-9.500" width="4.600" height="5" fill="#f2f2f2" transform="rotate(270)"/><rect x="-2.300" y="-9.500" width="4.600" height="5" fill="#f2f2f2" transform="rotate(315)"/><circle r="6.500" fill="#f2f2f2"/><circle r="2.800" fill="#3b4453"/></g>
<path d="M8.500,1087 h16.500 l-8.250,9 Z" fill="#f2f2f2"/>
<g transform="translate(348,1092) scale(0.95)"><rect x="-2.300" y="-9.500" width="4.600" height="5" fill="#f2f2f2" transform="rotate(0)"/><rect x="-2.300" y="-9.500" width="4.600" height="5" fill="#f2f2f2" transform="rotate(45)"/><rect x="-2.300" y="-9.500" width="4.600" height="5" fill="#f2f2f2" transform="rotate(90)"/><rect x="-2.300" y="-9.500" width="4.600" height="5" fill="#f2f2f2" transform="rotate(135)"/><rect x="-2.300" y="-9.500" width="4.600" height="5" fill="#f2f2f2" transform="rotate(180)"/><rect x="-2.300" y="-9.500" width="4.600" height="5" fill="#f2f2f2" transform="rotate(225)"/><rect x="-2.300" y="-9.500" width="4.600" height="5" fill="#f2f2f2" transform="rotate(270)"/><rect x="-2.300" y="-9.500" width="4.600" height="5" fill="#f2f2f2" transform="rotate(315)"/><circle r="6.500" fill="#f2f2f2"/><circle r="2.800" fill="#3b4453"/></g>
<path d="M8.500,1231 h16.500 l-8.250,9 Z" fill="#f2f2f2"/>
<g transform="translate(348,1236) scale(0.95)"><rect x="-2.300" y="-9.500" width="4.600" height="5" fill="#f2f2f2" transform="rotate(0)"/><rect x="-2.300" y="-9.500" width="4.600" height="5" fill="#f2f2f2" transform="rotate(45)"/><rect x="-2.300" y="-9.500" width="4.600" height="5" fill="#f2f2f2" transform="rotate(90)"/><rect x="-2.300" y="-9.500" width="4.600" height="5" fill="#f2f2f2" transform="rotate(135)"/><rect x="-2.300" y="-9.500" width="4.600" height="5" fill="#f2f2f2" transform="rotate(180)"/><rect x="-2.300" y="-9.500" width="4.600" height="5" fill="#f2f2f2" transform="rotate(225)"/><rect x="-2.300" y="-9.500" width="4.600" height="5" fill="#f2f2f2" transform="rotate(270)"/><rect x="-2.300" y="-9.500" width="4.600" height="5" fill="#f2f2f2" transform="rotate(315)"/><circle r="6.500" fill="#f2f2f2"/><circle r="2.800" fill="#3b4453"/></g>
<path d="M8.500,1375 h16.500 l-8.250,9 Z" fill="#f2f2f2"/>
<g transform="translate(348,1380) scale(0.95)"><rect x="-2.300" y="-9.500" width="4.600" height="5" fill="#f2f2f2" transform="rotate(0)"/><rect x="-2.300" y="-9.500" width="4.600" height="5" fill="#f2f2f2" transform="rotate(45)"/><rect x="-2.300" y="-9.500" width="4.600" height="5" fill="#f2f2f2" transform="rotate(90)"/><rect x="-2.300" y="-9.500" width="4.600" height="5" fill="#f2f2f2" transform="rotate(135)"/><rect x="-2.300" y="-9.500" width="4.600" height="5" fill="#f2f2f2" transform="rotate(180)"/><rect x="-2.300" y="-9.500" width="4.600" height="5" fill="#f2f2f2" transform="rotate(225)"/><rect x="-2.300" y="-9.500" width="4.600" height="5" fill="#f2f2f2" transform="rotate(270)"/><rect x="-2.300" y="-9.500" width="4.600" height="5" fill="#f2f2f2" transform="rotate(315)"/><circle r="6.500" fill="#f2f2f2"/><circle r="2.800" fill="#3b4453"/></g>
<path d="M8.500,1519 h16.500 l-8.250,9 Z" fill="#f2f2f2"/>
<g transform="translate(348,1524) scale(0.95)"><rect x="-2.300" y="-9.500" width="4.600" height="5" fill="#f2f2f2" transform="rotate(0)"/><rect x="-2.300" y="-9.500" width="4.600" height="5" fill="#f2f2f2" transform="rotate(45)"/><rect x="-2.300" y="-9.500" width="4.600" height="5" fill="#f2f2f2" transform="rotate(90)"/><rect x="-2.300" y="-9.500" width="4.600" height="5" fill="#f2f2f2" transform="rotate(135)"/><rect x="-2.300" y="-9.500" width="4.600" height="5" fill="#f2f2f2" transform="rotate(180)"/><rect x="-2.300" y="-9.500" width="4.600" height="5" fill="#f2f2f2" transform="rotate(225)"/><rect x="-2.300" y="-9.500" width="4.600" height="5" fill="#f2f2f2" transform="rotate(270)"/><rect x="-2.300" y="-9.500" width="4.600" height="5" fill="#f2f2f2" transform="rotate(315)"/><circle r="6.500" fill="#f2f2f2"/><circle r="2.800" fill="#3b4453"/></g>
<g transform="translate(52,290)"><path d="M-29,29 L29,-29" fill="none" stroke="#e4e4e4" stroke-width="2.6" /><rect x="-32.5" y="25.5" width="7" height="7" fill="#8fc4f7" stroke="#3b4453" stroke-width="0.8"/><rect x="25.5" y="-32.5" width="7" height="7" fill="#8fc4f7" stroke="#3b4453" stroke-width="0.8"/></g><g transform="translate(140,290)"><path d="M-29,15 H11 M11,15 a17,15 0 0 0 0,-30" fill="none" stroke="#e4e4e4" stroke-width="2.6" /><rect x="-32.5" y="11.5" width="7" height="7" fill="#8fc4f7" stroke="#3b4453" stroke-width="0.8"/><rect x="7.5" y="11.5" width="7" height="7" fill="#8fc4f7" stroke="#3b4453" stroke-width="0.8"/><rect x="7.5" y="-18.5" width="7" height="7" fill="#8fc4f7" stroke="#3b4453" stroke-width="0.8"/></g><g transform="translate(228,290)"><circle cx="0" cy="0" r="30.5" fill="none" stroke="#e4e4e4" stroke-width="2.6"/><path d="M2.0,-2.0 L15.5,-15.5" stroke="#8fc4f7" stroke-width="2.6" fill="none"/><path d="M20.0,-20.0 L16.8,-10.5 L10.5,-16.8 Z" fill="#8fc4f7"/><rect x="-3.5" y="-3.5" width="7" height="7" fill="#8fc4f7" stroke="#3b4453" stroke-width="0.8"/></g><g transform="translate(316,290)"><rect x="-29" y="-21" width="58" height="42" fill="none" stroke="#e4e4e4" stroke-width="2.6" /><rect x="-32.5" y="-24.5" width="7" height="7" fill="#8fc4f7" stroke="#3b4453" stroke-width="0.8"/><rect x="25.5" y="17.5" width="7" height="7" fill="#8fc4f7" stroke="#3b4453" stroke-width="0.8"/><path d="M41,42 h-9 l9,-9 Z" fill="#9b9ea3"/></g><path d="M270,332 h-9 l9,-9 Z" fill="#9b9ea3"/><g transform="translate(30,361)"><path d="M-12,12 C-12,-2 -2,-12 12,-13" fill="none" stroke="#e4e4e4" stroke-width="2.6" stroke-dasharray="8 4"/><rect x="-14.5" y="9.5" width="5" height="5" fill="#8fc4f7" stroke="#3b4453" stroke-width="0.8"/><rect x="-7.5" y="-7.5" width="5" height="5" fill="#8fc4f7" stroke="#3b4453" stroke-width="0.8"/><rect x="9.5" y="-15.5" width="5" height="5" fill="#8fc4f7" stroke="#3b4453" stroke-width="0.8"/><path d="M22,21 h-8 l8,-8 Z" fill="#9b9ea3"/></g><g transform="translate(74,361)"><path d="M-14,14 C-12,0 -10,-6 -8,-6 C-4,-6 2,6 8,6 C11,6 13,-6 14,-14" fill="none" stroke="#e4e4e4" stroke-width="2.6" stroke-dasharray="9 3"/><rect x="-16.5" y="11.5" width="5" height="5" fill="#8fc4f7" stroke="#3b4453" stroke-width="0.8"/><rect x="-10.5" y="-8.5" width="5" height="5" fill="#8fc4f7" stroke="#3b4453" stroke-width="0.8"/><rect x="5.5" y="3.5" width="5" height="5" fill="#8fc4f7" stroke="#3b4453" stroke-width="0.8"/><rect x="11.5" y="-16.5" width="5" height="5" fill="#8fc4f7" stroke="#3b4453" stroke-width="0.8"/><path d="M22,21 h-8 l8,-8 Z" fill="#9b9ea3"/></g><g transform="translate(118,361)"><path d="M-10,-9 H10 M-10,7 H10" fill="none" stroke="#e4e4e4" stroke-width="2.6" /><path d="M-16,-1 H16" fill="none" stroke="#a9cdf0" stroke-width="2.6" stroke-dasharray="11 3 4 3"/><path d="M22,21 h-8 l8,-8 Z" fill="#9b9ea3"/></g><g transform="translate(162,361)"><path d="M0.0,0.0 L10.5,-10.5" stroke="#e4e4e4" stroke-width="2.6" fill="none"/><path d="M15.0,-15.0 L12.2,-5.1 L5.1,-12.2 Z" fill="#e4e4e4"/><path d="M0.0,0.0 L-10.5,10.5" stroke="#e4e4e4" stroke-width="2.6" fill="none"/><path d="M-15.0,15.0 L-12.2,5.1 L-5.1,12.2 Z" fill="#e4e4e4"/><rect x="-2.5" y="-2.5" width="5" height="5" fill="#8fc4f7" stroke="#3b4453" stroke-width="0.8"/><path d="M22,21 h-8 l8,-8 Z" fill="#9b9ea3"/></g><g transform="translate(206,361)"><ellipse cx="-1" cy="0" rx="13.500" ry="9" fill="none" stroke="#e4e4e4" stroke-width="2.600"/><rect x="-3.5" y="-11.5" width="5" height="5" fill="#8fc4f7" stroke="#3b4453" stroke-width="0.8"/><rect x="-3.5" y="-2.5" width="5" height="5" fill="#8fc4f7" stroke="#3b4453" stroke-width="0.8"/><rect x="9.5" y="-2.5" width="5" height="5" fill="#8fc4f7" stroke="#3b4453" stroke-width="0.8"/><path d="M22,21 h-8 l8,-8 Z" fill="#9b9ea3"/></g><g transform="translate(250,361)"><path d="M-13,-8 q3,-4 6,-1 q3,-4 6,0 q3,-4 6,0 q3,-3 6,1 q4,3 1,6 q3,4 -1,7 q1,5 -5,4 q-3,4 -6,0 q-3,4 -7,0 q-3,4 -6,-1 q-5,0 -3,-5 q-4,-3 0,-6 q-2,-4 3,-5 Z" fill="none" stroke="#e4e4e4" stroke-width="2.4" /><path d="M22,21 h-8 l8,-8 Z" fill="#9b9ea3"/></g><g transform="translate(294,361)"><path d="M-15,-15 L0,0 L15,-15 M0,0 L-15,15" fill="none" stroke="#e4e4e4" stroke-width="2.4" /><rect x="-2.5" y="-2.5" width="5" height="5" fill="#8fc4f7" stroke="#3b4453" stroke-width="0.8"/><path d="M22,21 h-8 l8,-8 Z" fill="#9b9ea3"/></g><g transform="translate(338,361)"><path d="M-16,-1 H-8 L-3,-10 L3,11 L8,-1 H16" fill="none" stroke="#e4e4e4" stroke-width="2.4" /></g>
<g transform="translate(52,482)"><rect x="-20" y="-20" width="40" height="40" fill="#2d4563"/><path d="M-20.0,-14.5 L-14.5,-20.0 M-20.0,-3.5 L-3.5,-20.0 M-20.0,7.5 L7.5,-20.0 M-20.0,18.5 L18.5,-20.0 M-10.5,20.0 L20.0,-10.5 M0.5,20.0 L20.0,0.5 M11.5,20.0 L20.0,11.5 " fill="none" stroke="#8fc4f7" stroke-width="2.3" /><path d="M-23,-32 V32 M23,-32 V32 M-32,-23 H32 M-32,23 H32" fill="none" stroke="#e4e4e4" stroke-width="2.6" /></g><g transform="translate(140,482)"><rect x="-20" y="-20" width="40" height="40" fill="#2d4563"/><path d="M-20.0,-14.5 L-14.5,-20.0 M-20.0,-3.5 L-3.5,-20.0 M-20.0,7.5 L7.5,-20.0 M-20.0,18.5 L18.5,-20.0 M-10.5,20.0 L20.0,-10.5 M0.5,20.0 L20.0,0.5 M11.5,20.0 L20.0,11.5 " fill="none" stroke="#8fc4f7" stroke-width="2.3" /><path d="M-23,-32 V32 M23,-32 V32 M-32,-23 H32 M-32,23 H32" fill="none" stroke="#e4e4e4" stroke-width="2.6" /><path d="M-12,-22 h24 v-3 l-4,-5 h-16 l-4,5 Z" fill="#ffffff" stroke="#3b4453" stroke-width="1.2"/><path d="M41,42 h-9 l9,-9 Z" fill="#9b9ea3"/></g><g transform="translate(228,482)"><defs><linearGradient id="gr1" x1="0" y1="0" x2="0" y2="1"><stop offset="0" stop-color="#8fc4f7"/><stop offset="0.35" stop-color="#86b0dc"/><stop offset="1" stop-color="#3e4250"/></linearGradient></defs><rect x="-20" y="-20" width="40" height="40" fill="url(#gr1)"/><path d="M-23,-32 V32 M23,-32 V32 M-32,-23 H32 M-32,23 H32" fill="none" stroke="#e4e4e4" stroke-width="2.6" /></g><g transform="translate(294,460)"><path d="M-11,-16 V16 M11,-16 V16 M-16,-11 H16 M-16,11 H16" fill="none" stroke="#8fc4f7" stroke-width="2.6" /></g><g transform="translate(338,460)"><path d="M-16,-13 h20 l12,11 v15 h-32 Z" fill="#dcdcdc" /><circle cx="0" cy="0" r="4.500" fill="#3b4453"/></g><g transform="translate(294,504)"><rect x="-16" y="-16" width="32" height="32" fill="#3b4453"/><path d="M-16.0,-13.0 L-13.0,-16.0 M-16.0,-7.0 L-7.0,-16.0 M-16.0,-1.0 L-1.0,-16.0 M-16.0,5.0 L5.0,-16.0 M-16.0,11.0 L11.0,-16.0 M-15.0,16.0 L16.0,-15.0 M-9.0,16.0 L16.0,-9.0 M-3.0,16.0 L16.0,-3.0 M3.0,16.0 L16.0,3.0 M9.0,16.0 L16.0,9.0 M15.0,16.0 L16.0,15.0 " fill="none" stroke="#dcdcdc" stroke-width="2.4" /><path d="M-11,-9 h11 v6 h11 v13 h-22 Z" fill="#8fc4f7" stroke="#3b4453" stroke-width="1.5"/></g>
<g transform="translate(52,626)"><g transform="translate(0,3) scale(1)"><rect x="-31" y="-10" width="38" height="28" fill="#737985" stroke="#e4e4e4" stroke-width="2.600"/><rect x="-34" y="15" width="6" height="6" fill="#e4e4e4"/><circle cx="8" cy="18" r="12.500" fill="#737985" fill-opacity=".8" stroke="#e4e4e4" stroke-width="2.600"/><path d="M-4,18 h11 v-12" fill="none" stroke="#e4e4e4" stroke-width="2.200" stroke-opacity=".8"/></g><path transform="translate(16,-15)" d="M0,-17 L4,-8 L12,-12 L9,-4 L17,0 L9,4 L12,12 L4,8 L0,17 L-4,8 L-12,12 L-9,4 L-17,0 L-9,-4 L-12,-12 L-4,-8 Z" fill="#f2c867" stroke="#3b4453" stroke-width="1"/></g><g transform="translate(140,626)"><path d="M-3,-30 h22 l11,11 v31 h-33 Z" fill="#8fc4f7" /><path d="M19,-30 v11 h11 Z" fill="#c6e0fb" /><g transform="translate(3,-1) scale(0.97)"><rect x="-31" y="-10" width="38" height="28" fill="#737985" stroke="#e4e4e4" stroke-width="2.600"/><rect x="-34" y="15" width="6" height="6" fill="#e4e4e4"/><circle cx="8" cy="18" r="12.500" fill="#737985" fill-opacity=".8" stroke="#e4e4e4" stroke-width="2.600"/><path d="M-4,18 h11 v-12" fill="none" stroke="#e4e4e4" stroke-width="2.200" stroke-opacity=".8"/></g></g><g transform="translate(228,626)"><g transform="translate(3,-2) scale(0.95)"><rect x="-31" y="-10" width="38" height="28" fill="#737985" stroke="#e4e4e4" stroke-width="2.600"/><rect x="-34" y="15" width="6" height="6" fill="#e4e4e4"/><circle cx="8" cy="18" r="12.500" fill="#737985" fill-opacity=".8" stroke="#e4e4e4" stroke-width="2.600"/><path d="M-4,18 h11 v-12" fill="none" stroke="#e4e4e4" stroke-width="2.200" stroke-opacity=".8"/></g><g transform="translate(-1,1) scale(1.25) rotate(-38)"><path d="M0,0 L7,-5 L7,5 Z" fill="#d9d2c4" stroke="#3b4453" stroke-width="1"/><rect x="7" y="-5" width="17" height="10" fill="#f2c867" stroke="#3b4453" stroke-width="1"/><path d="M24,-5 h3 a5,5 0 0 1 0,10 h-3 Z" fill="#e0645a" stroke="#3b4453" stroke-width="1"/></g></g><g transform="translate(316,626)"><path d="M-32,-27 h27 l33,31 l-27,27 l-33,-33 Z" fill="#d6d6d6" /><circle cx="-20" cy="-16" r="4" fill="#333"/><path d="M-14,-6 l3,3 M-7,1 l14,14 M-19,3 l3,3 M-12,10 l10,10 M-3,-6 l3,3 M4,1 l6,6" fill="none" stroke="#666" stroke-width="2" /><g transform="translate(0,1) scale(1.2) rotate(-40)"><path d="M0,0 L7,-5 L7,5 Z" fill="#d9d2c4" stroke="#3b4453" stroke-width="1"/><rect x="7" y="-5" width="17" height="10" fill="#f2c867" stroke="#3b4453" stroke-width="1"/><path d="M24,-5 h3 a5,5 0 0 1 0,10 h-3 Z" fill="#e0645a" stroke="#3b4453" stroke-width="1"/></g><path d="M41,42 h-9 l9,-9 Z" fill="#9b9ea3"/></g><g transform="translate(30,696)"><g transform="translate(0,0) scale(0.95)"><path d="M-14,-16 h14 l16,16 l-14,16 l-16,-16 Z" fill="#d6d6d6"/><circle cx="-8.500" cy="-10" r="2.200" fill="#333"/><path d="M-6,-4 l2,2 M-1,1 l7,7 M-9,3 l2,2 M-4,8 l5,5" stroke="#555" stroke-width="2"/></g></g><g transform="translate(74,696)"><g transform="translate(4,3) scale(0.42)"><rect x="-31" y="-10" width="38" height="28" fill="#737985" stroke="#e4e4e4" stroke-width="2.600"/><rect x="-34" y="15" width="6" height="6" fill="#e4e4e4"/><circle cx="8" cy="18" r="12.500" fill="#737985" fill-opacity=".8" stroke="#e4e4e4" stroke-width="2.600"/><path d="M-4,18 h11 v-12" fill="none" stroke="#e4e4e4" stroke-width="2.200" stroke-opacity=".8"/></g><rect x="-3" y="-16" width="19" height="15" fill="#f2f2f2" stroke="#3b4453" stroke-width="1"/><rect x="-3" y="-16" width="19" height="4" fill="#9a9da3"/><path d="M1,-8 h3 M6,-8 h7 M1,-4 h3 M6,-4 h7" stroke="#555" stroke-width="1.800"/></g><g transform="translate(118,696)"><g transform="translate(4,3) scale(0.42)"><rect x="-31" y="-10" width="38" height="28" fill="#737985" stroke="#e4e4e4" stroke-width="2.600"/><rect x="-34" y="15" width="6" height="6" fill="#e4e4e4"/><circle cx="8" cy="18" r="12.500" fill="#737985" fill-opacity=".8" stroke="#e4e4e4" stroke-width="2.600"/><path d="M-4,18 h11 v-12" fill="none" stroke="#e4e4e4" stroke-width="2.200" stroke-opacity=".8"/></g><path d="M-1,-16 h17 v15 h-15 l-2,-2 Z" fill="#b9bcc0" stroke="#3b4453" stroke-width="1"/><rect x="3" y="-16" width="9" height="6" fill="#f4f4f4"/><rect x="3" y="-6" width="10" height="5" fill="#f4f4f4"/></g><g transform="translate(162,696)"><rect x="-14" y="-15" width="26" height="26" fill="#737985" stroke="#e4e4e4" stroke-width="2.4" /><path d="M9,4 v14 M2,11 h14" stroke="#3b4453" stroke-width="7"/><path d="M9,5 v12 M3,11 h12" stroke="#6fb0ee" stroke-width="4.500"/></g><g transform="translate(206,696)"><g transform="translate(-2,1) scale(0.95)"><path d="M-14,-16 h14 l16,16 l-14,16 l-16,-16 Z" fill="#d6d6d6"/><circle cx="-8.500" cy="-10" r="2.200" fill="#333"/><path d="M-6,-4 l2,2 M-1,1 l7,7 M-9,3 l2,2 M-4,8 l5,5" stroke="#555" stroke-width="2"/></g><circle cx="8" cy="-8" r="9" fill="#3b4453"/><g transform="translate(8,-8)"><path d="M-6.5,0 a6.5,6.5 0 0 1 11.0,-4.5" fill="none" stroke="#7fd68a" stroke-width="3"/><path d="M6.5,0 a6.5,6.5 0 0 1 -11.0,4.5" fill="none" stroke="#7fd68a" stroke-width="3"/><path d="M1.3,-7.2 l5.9,0.7 l-0.7,5.9 Z" fill="#7fd68a"/><path d="M-1.3,7.2 l-5.9,-0.7 l0.7,-5.9 Z" fill="#7fd68a"/></g></g><g transform="translate(250,696)"><g transform="translate(-2,1) scale(0.95)"><path d="M-14,-16 h14 l16,16 l-14,16 l-16,-16 Z" fill="#d6d6d6"/><circle cx="-8.500" cy="-10" r="2.200" fill="#333"/><path d="M-6,-4 l2,2 M-1,1 l7,7 M-9,3 l2,2 M-4,8 l5,5" stroke="#555" stroke-width="2"/></g><rect x="2" y="-15" width="14" height="14" fill="#6fa8e6" stroke="#3b4453" stroke-width="1"/><path d="M5,-17 V2 M13,-17 V2 M0,-12 H18 M0,-4 H18" stroke="#8fc4f7" stroke-width="2" fill="none"/></g><g transform="translate(294,696)"><g transform="translate(-3,-11) scale(0.36)"><rect x="-31" y="-10" width="38" height="28" fill="#737985" stroke="#e4e4e4" stroke-width="2.600"/><rect x="-34" y="15" width="6" height="6" fill="#e4e4e4"/><circle cx="8" cy="18" r="12.500" fill="#737985" fill-opacity=".8" stroke="#e4e4e4" stroke-width="2.600"/><path d="M-4,18 h11 v-12" fill="none" stroke="#e4e4e4" stroke-width="2.200" stroke-opacity=".8"/></g><g transform="translate(7,7) scale(0.4)"><rect x="-31" y="-10" width="38" height="28" fill="#737985" stroke="#8fc4f7" stroke-width="2.600"/><rect x="-34" y="15" width="6" height="6" fill="#8fc4f7"/><circle cx="8" cy="18" r="12.500" fill="#737985" fill-opacity=".8" stroke="#8fc4f7" stroke-width="2.600"/><path d="M-4,18 h11 v-12" fill="none" stroke="#8fc4f7" stroke-width="2.200" stroke-opacity=".8"/></g><path d="M5,-12 h8 v6" fill="none" stroke="#e4e4e4" stroke-width="2.2" /><path d="M1,-12 l6,-4.500 v9 Z" fill="#e4e4e4" /></g>
<g transform="translate(52,818)"><path d="M0,-32 L10,-17 H3.500 V-3.500 H17 V-10 L32,0 L17,10 V3.500 H3.500 V17 H10 L0,32 L-10,17 H-3.500 V3.500 H-17 V10 L-32,0 L-17,-10 V-3.500 H-3.500 V-17 H-10 Z" fill="#ffffff" /></g><g transform="translate(118,796)"><circle cx="-10" cy="-8" r="6" fill="none" stroke="#e4e4e4" stroke-width="2.4"/><path d="M0,-11 h10 v6" fill="none" stroke="#e4e4e4" stroke-width="2.4" /><path d="M5,-6 h10 l-5,6 Z" fill="#e4e4e4" /><circle cx="-2" cy="9" r="6" fill="none" stroke="#8fc4f7" stroke-width="2.4"/><path d="M8,3.500 a6,6 0 0 1 0,11" fill="none" stroke="#8fc4f7" stroke-width="2.4" /></g><g transform="translate(162,796)"><path d="M13,1 A13,13 0 1 1 2,-12" fill="none" stroke="#e4e4e4" stroke-width="2.6" /><path d="M0,-19 l10,6 l-10,7 Z" fill="#e4e4e4" /></g><g transform="translate(118,840)"><path d="M-2,-13 V13 H-14 Z" fill="none" stroke="#d0d0d0" stroke-width="2.4" /><path d="M2,-13 V13 H14 Z" fill="none" stroke="#8fc4f7" stroke-width="2.4" /></g><g transform="translate(162,840)"><path d="M-13,-14 H5 V2 M-13,-14 V2 H-2" fill="none" stroke="#e4e4e4" stroke-width="2.2" stroke-dasharray="4 3"/><rect x="-15.25" y="-16.25" width="4.5" height="4.5" fill="#f4f4f4" stroke="#3b4453" stroke-width="0.8"/><rect x="-6.25" y="-16.25" width="4.5" height="4.5" fill="#f4f4f4" stroke="#3b4453" stroke-width="0.8"/><rect x="2.75" y="-16.25" width="4.5" height="4.5" fill="#f4f4f4" stroke="#3b4453" stroke-width="0.8"/><rect x="-15.25" y="-8.25" width="4.5" height="4.5" fill="#f4f4f4" stroke="#3b4453" stroke-width="0.8"/><rect x="-15.25" y="-0.25" width="4.5" height="4.5" fill="#f4f4f4" stroke="#3b4453" stroke-width="0.8"/><rect x="-6.25" y="-0.25" width="4.5" height="4.5" fill="#f4f4f4" stroke="#3b4453" stroke-width="0.8"/><rect x="-6.25" y="-8.25" width="4.5" height="4.5" fill="#f4f4f4" stroke="#3b4453" stroke-width="0.8"/><path d="M3,-3 v19 l5,-5 h8 Z" fill="#f4f4f4" stroke="#3b4453" stroke-width="1"/><path d="M13,-10 v7 M9.500,-6.500 h7" fill="none" stroke="#e4e4e4" stroke-width="2" /></g><g transform="translate(228,818)"><path d="M-32,-27 H0" fill="none" stroke="#7fb6ee" stroke-width="2.4" stroke-dasharray="8 4"/><path d="M16,-27 H32" fill="none" stroke="#e4e4e4" stroke-width="2.4" /><path d="M1,-31 L8,-22 L9,10 L1,8 Z" fill="#ffffff" /><path d="M-16,-19 L-14,-8 L5,16 L10,8 Z" fill="#ffffff" /><ellipse cx="-2" cy="21" rx="7" ry="10.500" transform="rotate(15 -2 21)" fill="none" stroke="#fff" stroke-width="4"/><ellipse cx="16" cy="14" rx="7" ry="10.500" transform="rotate(-55 16 14)" fill="none" stroke="#fff" stroke-width="4"/><circle cx="6" cy="6" r="2" fill="#3b4453"/><path d="M41,40 h-9 l9,-9 Z" fill="#9b9ea3"/></g><g transform="translate(294,796)"><path d="M-14,14 V6 M4,-14 H16" fill="none" stroke="#e4e4e4" stroke-width="2.4" /><path d="M-14,2 V0 A14,14 0 0 1 0,-14 H2" fill="none" stroke="#8fc4f7" stroke-width="2.6" /><path d="M22,21 h-8 l8,-8 Z" fill="#9b9ea3"/></g><rect x="317" y="774" width="43" height="44" fill="#323845"/><g transform="translate(338,796)"><rect x="-14" y="-14" width="12" height="12" fill="#d6d6d6"/><rect x="2" y="-14" width="12" height="12" fill="#8fc4f7"/><rect x="-14" y="2" width="12" height="12" fill="#8fc4f7"/><rect x="2" y="2" width="12" height="12" fill="#8fc4f7"/><path d="M22,21 h-8 l8,-8 Z" fill="#9b9ea3"/></g><g transform="translate(294,840)"><path d="M16,-12 H-4 A12,12 0 0 0 -4,12 H16" fill="none" stroke="#8fc4f7" stroke-width="2.6" /><path d="M16,-6 H-4 A6,6 0 0 0 -4,6 H16" fill="none" stroke="#e4e4e4" stroke-width="2.4" /></g><g transform="translate(338,840)"><path d="M-14,-5 L-6,-13 H15 V5 L6,14" fill="none" stroke="#8fc4f7" stroke-width="2.4" /><path d="M-6,-13 M6,-5 L15,-13" fill="none" stroke="#8fc4f7" stroke-width="2.4" /><rect x="-11" y="-5" width="17" height="19" fill="none" stroke="#e4e4e4" stroke-width="2.4" /><path d="M-15,-3 V14" fill="none" stroke="#8fc4f7" stroke-width="2.4" /></g><g transform="translate(30,888)"><rect x="-15" y="-15" width="13" height="29" fill="none" stroke="#e4e4e4" stroke-width="2.4" /><path d="M2,-15 h6 l8,30 h-16" fill="none" stroke="#8fc4f7" stroke-width="2.4" /><path d="M-8,7 h11" stroke="#3b4453" stroke-width="6"/><path d="M-8.0,7.0 L1.1,7.0" stroke="#f4f4f4" stroke-width="2.6" fill="none"/><path d="M6.0,7.0 L-1.0,11.5 L-1.0,2.5 Z" fill="#f4f4f4"/></g><g transform="translate(74,888)"><path d="M-16,-11 l4,-5 h14 v14 l-4,5 h-14 Z" fill="#e0e0e0" /><path d="M-16,-11 h14 v14 h-14 Z" fill="#d0d0d0" /><rect x="2" y="2" width="14" height="14" fill="#8fc4f7"/><path d="M-12,6 v6 h6" fill="none" stroke="#f4f4f4" stroke-width="2.4" /><path d="M-7,7.500 l6,4.500 l-6,4.500 Z" fill="#f4f4f4" /></g><g transform="translate(118,888)"><path d="M-15,-8 V-15 H16 V15 H5" fill="none" stroke="#8fc4f7" stroke-width="2.4" /><rect x="-15" y="-1" width="17" height="16" fill="none" stroke="#e4e4e4" stroke-width="2.4" /></g><g transform="translate(162,888)"><path d="M-15,15 L15,-15" fill="none" stroke="#d0d0d0" stroke-width="2.4" /><path d="M-6,-6 L6,6" fill="none" stroke="#8fc4f7" stroke-width="2.6" /><path d="M22,21 h-8 l8,-8 Z" fill="#9b9ea3"/></g><g transform="translate(206,888)"><path d="M-16,0 H-8 M8,0 H16" fill="none" stroke="#f4f4f4" stroke-width="2.4" /><path d="M-9,-5 L-1,0 L-9,5 Z" fill="#8fc4f7" /><path d="M9,-5 L1,0 L9,5 Z" fill="#8fc4f7" /></g><g transform="translate(250,888)"><rect x="-16" y="-14" width="19" height="15" fill="#c9c9c9"/><rect x="-3" y="0" width="18" height="13" fill="#3b4453" stroke="#e4e4e4" stroke-width="2.4" /><path d="M0,10 h9 v-7 Z" fill="#c9c9c9" /><path d="M6,-11 h7 v5" fill="none" stroke="#f4f4f4" stroke-width="2.2" /><path d="M9,-7 h8 l-4,5 Z" fill="#f4f4f4" /><path d="M-8,12 h-5 v-5" fill="none" stroke="#f4f4f4" stroke-width="2.2" /><path d="M-17,8 h8 l-4,-5 Z" fill="#f4f4f4" /></g><g transform="translate(294,888)"><rect x="-15" y="-15" width="17" height="12" fill="#737985" stroke="#e4e4e4" stroke-width="2"/><circle cx="3" cy="-5" r="6.500" fill="#737985" fill-opacity=".8" stroke="#e4e4e4" stroke-width="2"/><rect x="-17" y="-5" width="4" height="4" fill="#e4e4e4"/><circle cx="10" cy="10" r="5.5" fill="none" stroke="#8fc4f7" stroke-width="2.4"/><path d="M-11,3 v8 h5" fill="none" stroke="#f4f4f4" stroke-width="2.4" /><path d="M-7,6 l7,5 l-7,5 Z" fill="#f4f4f4" /></g><g transform="translate(338,888)"><path d="M0,-16 V3" fill="none" stroke="#e8c39a" stroke-width="2.4" /><path d="M-3,3 h6 v4 h-6 Z" fill="#c9a26a" /><path d="M-3,7 h6 l6,9 h-18 Z" fill="#f2c867" /></g><g transform="translate(52,1010)"><text x="0" y="27" font-family="Liberation Sans, sans-serif" font-size="78" font-weight="normal" stroke="#d9d9d9" stroke-width="1.800" fill="#d9d9d9" text-anchor="middle">A</text></g><g transform="translate(140,1010)"><text x="-9" y="18" font-family="Liberation Sans, sans-serif" font-size="70" font-weight="normal" stroke="#d9d9d9" stroke-width="1.800" fill="#d9d9d9" text-anchor="middle">A</text><g transform="translate(-4,32) scale(1.0)"><path d="M0,0 c4,-10 10,-15 17,-17 l5,5 c-2,7 -7,12 -22,12 Z" fill="#e8c39a" stroke="#3b4453" stroke-width="1"/><path d="M19,-19 l10,-10 l6,6 l-10,10 Z" fill="#f4f4f4" stroke="#3b4453" stroke-width="1"/></g></g><g transform="translate(206,987)"><text x="0" y="11" font-family="Liberation Sans, sans-serif" font-size="36" font-weight="normal" fill="#e4e4e4" text-anchor="middle">A</text><path d="M-16,16 H16" fill="none" stroke="#8fc4f7" stroke-width="2.4" /></g><g transform="translate(250,987)"><text x="0" y="-4" font-family="Liberation Sans, sans-serif" font-size="13" font-weight="bold" fill="#e4e4e4" text-anchor="middle" letter-spacing="0.5">ABC</text><path d="M-9,5 l6,6 l12,-13" fill="none" stroke="#7fd68a" stroke-width="4" /></g><g transform="translate(294,987)"><rect x="-16" y="-15" width="17" height="14" fill="#f4f4f4"/><path d="M-13,-11 h2.500 M-9,-11 h7 M-13,-7.5 h2.500 M-9,-7.5 h7 M-13,-4 h2.500 M-9,-4 h7" stroke="#3f7fd9" stroke-width="2"/><text x="9" y="-3" font-family="Liberation Sans, sans-serif" font-size="17" font-weight="bold" fill="#8fc4f7" text-anchor="middle">A</text><rect x="-8" y="-1" width="24" height="8" fill="#8fc4f7"/><rect x="-8" y="7" width="24" height="9" fill="#d6d6d6"/></g><g transform="translate(338,987)"><text x="-3" y="-6" font-family="Liberation Sans, sans-serif" font-size="12" font-weight="bold" fill="#e4e4e4" text-anchor="middle" letter-spacing="0.5">PDF</text><path d="M-12,-2 v8 h6" fill="none" stroke="#f4f4f4" stroke-width="2.2" /><path d="M-8,2 l6,4 l-6,4 Z" fill="#f4f4f4" /><text x="7" y="16" font-family="Liberation Sans, sans-serif" font-size="24" font-weight="normal" fill="#8fc4f7" text-anchor="middle">A</text></g><g transform="translate(206,1032)"><rect x="-16" y="-15" width="22" height="23" fill="#d0d0d0"/><path d="M-12,-10 h14 M-12,-6 h14 M-12,-2 h14" stroke="#666" stroke-width="1.800"/><path d="M7,-12 h5 v6" fill="none" stroke="#f4f4f4" stroke-width="2" /><path d="M8.500,-7 h7 l-3.500,5 Z" fill="#f4f4f4" /><text x="7" y="16" font-family="Liberation Sans, sans-serif" font-size="25" fill="#f4f4f4" stroke="#3b4453" stroke-width="0.6" text-anchor="middle">A</text></g><g transform="translate(250,1032)"><circle cx="-3" cy="-3" r="12" fill="none" stroke="#e4e4e4" stroke-width="2.4"/><text x="-3" y="3" font-family="Liberation Sans, sans-serif" font-size="17" font-weight="normal" fill="#e4e4e4" text-anchor="middle">A</text><path d="M6,7 L15,15" fill="none" stroke="#d9b27a" stroke-width="3.4" /></g><g transform="translate(294,1032)"><text x="-9" y="-3" font-family="Liberation Sans, sans-serif" font-size="17" font-weight="bold" fill="#8fc4f7" text-anchor="middle">A</text><g transform="translate(8,-8)"><path d="M-6.5,0 a6.5,6.5 0 0 1 11.0,-4.5" fill="none" stroke="#7fd68a" stroke-width="3"/><path d="M6.5,0 a6.5,6.5 0 0 1 -11.0,4.5" fill="none" stroke="#7fd68a" stroke-width="3"/><path d="M1.3,-7.2 l5.9,0.7 l-0.7,5.9 Z" fill="#7fd68a"/><path d="M-1.3,7.2 l-5.9,-0.7 l0.7,-5.9 Z" fill="#7fd68a"/></g><rect x="-16" y="-1" width="24" height="8" fill="#8fc4f7"/><rect x="-16" y="8" width="24" height="8" fill="#d6d6d6"/></g><g transform="translate(338,1032)"><text x="-5" y="-8" font-family="Liberation Sans, sans-serif" font-size="12" font-weight="bold" fill="#e4e4e4" text-anchor="middle" letter-spacing="0.5">PDF</text><path d="M-13,-4 v8 h6" fill="none" stroke="#f4f4f4" stroke-width="2.2" /><path d="M-9,0 l6,4 l-6,4 Z" fill="#f4f4f4" /><text x="4" y="15" font-family="Liberation Sans, sans-serif" font-size="22" font-weight="normal" fill="#d0d0d0" text-anchor="middle">A</text><path d="M3,15 L13,5" fill="none" stroke="#8fc4f7" stroke-width="3.6" /><path d="M11,1 a4,4 0 1 0 6,5" fill="none" stroke="#8fc4f7" stroke-width="3" /></g><g transform="translate(52,1154)"><path d="M-31,-32 V32 M31,-32 V32" fill="none" stroke="#e4e4e4" stroke-width="2.4" /><path d="M-29.0,-19.0 L23.4,-19.0" stroke="#d6d6d6" stroke-width="2.4" fill="none"/><path d="M29.0,-19.0 L21.0,-14.5 L21.0,-23.5 Z" fill="#d6d6d6"/><path d="M-29.0,-19.0 L-21.0,-23.5 L-21.0,-14.5 Z" fill="#d6d6d6"/><path d="M-2.600,-10 L0,-24 L2.600,-10 Z" fill="#f2c867" transform="translate(0,25) rotate(-84)"/><path d="M-2.600,-10 L0,-24 L2.600,-10 Z" fill="#f2c867" transform="translate(0,25) rotate(-45)"/><path d="M-2.600,-10 L0,-24 L2.600,-10 Z" fill="#f2c867" transform="translate(0,25) rotate(0)"/><path d="M-2.600,-10 L0,-24 L2.600,-10 Z" fill="#f2c867" transform="translate(0,25) rotate(45)"/><path d="M-2.600,-10 L0,-24 L2.600,-10 Z" fill="#f2c867" transform="translate(0,25) rotate(84)"/></g><g transform="translate(140,1154)"><path d="M-31,-8 V26 M31,-8 V26" fill="none" stroke="#e4e4e4" stroke-width="2.4" /><path d="M-29.0,9.0 L23.4,9.0" stroke="#d6d6d6" stroke-width="2.4" fill="none"/><path d="M29.0,9.0 L21.0,13.5 L21.0,4.5 Z" fill="#d6d6d6"/><path d="M-29.0,9.0 L-21.0,4.5 L-21.0,13.5 Z" fill="#d6d6d6"/><g transform="translate(-4,5) scale(1.0)"><path d="M0,0 c4,-10 10,-15 17,-17 l5,5 c-2,7 -7,12 -22,12 Z" fill="#e8c39a" stroke="#3b4453" stroke-width="1"/><path d="M19,-19 l10,-10 l6,6 l-10,10 Z" fill="#f4f4f4" stroke="#3b4453" stroke-width="1"/></g></g><g transform="translate(206,1132)"><path d="M-15,-14 V14 M15,-14 V14" fill="none" stroke="#e4e4e4" stroke-width="2.4" /><path d="M-13.0,-5.0 L8.8,-5.0" stroke="#7fb6ee" stroke-width="2.4" fill="none"/><path d="M13.0,-5.0 L7.0,-1.5 L7.0,-8.5 Z" fill="#7fb6ee"/><path d="M-13.0,-5.0 L-7.0,-8.5 L-7.0,-1.5 Z" fill="#7fb6ee"/><path d="M22,21 h-8 l8,-8 Z" fill="#9b9ea3"/></g><g transform="translate(250,1132)"><circle cx="0" cy="0" r="14" fill="none" stroke="#e4e4e4" stroke-width="2.4"/><path d="M0,-5 V5 M-5,0 H5" fill="none" stroke="#7fb6ee" stroke-width="2.4" /><path d="M22,21 h-8 l8,-8 Z" fill="#9b9ea3"/></g><g transform="translate(294,1132)"><path d="M-3,-16 V9 M-10,14 H4" fill="none" stroke="#e4e4e4" stroke-width="2.2" /><path d="M-8,8 h10 l-5,6 Z" fill="#e0e0e0" /><path d="M-16,-4 H-8" fill="none" stroke="#7fb6ee" stroke-width="2.4" /><path d="M-1.0,-4.0 L9.1,-4.0" stroke="#7fb6ee" stroke-width="2.6" fill="none"/><path d="M14.0,-4.0 L7.0,0.5 L7.0,-8.5 Z" fill="#7fb6ee"/><path d="M16,-9 V2" fill="none" stroke="#e4e4e4" stroke-width="2.2" /></g><g transform="translate(338,1132)"><path d="M-16.0,-12.0 L11.8,-12.0" stroke="#d6d6d6" stroke-width="2" fill="none"/><path d="M16.0,-12.0 L10.0,-8.5 L10.0,-15.5 Z" fill="#d6d6d6"/><path d="M-16.0,-12.0 L-10.0,-15.5 L-10.0,-8.5 Z" fill="#d6d6d6"/><path d="M-16.0,12.0 L11.8,12.0" stroke="#d6d6d6" stroke-width="2" fill="none"/><path d="M16.0,12.0 L10.0,15.5 L10.0,8.5 Z" fill="#d6d6d6"/><path d="M-16.0,12.0 L-10.0,8.5 L-10.0,15.5 Z" fill="#d6d6d6"/><rect x="-4" y="-8" width="9" height="17" fill="#f2c867"/><path d="M-4,-4 h4 M-4,0 h4 M-4,4 h4" stroke="#8a6d2a" stroke-width="1.400"/></g><g transform="translate(206,1176)"><path d="M-15,-13 V15 M0,-13 V15 M15,-3 V15" fill="none" stroke="#e4e4e4" stroke-width="2.4" /><path d="M-13.0,-4.0 L-5.5,-4.0" stroke="#7fb6ee" stroke-width="2.2" fill="none"/><path d="M-2.0,-4.0 L-7.0,-1.0 L-7.0,-7.0 Z" fill="#7fb6ee"/><path d="M-13.0,-4.0 L-8.0,-7.0 L-8.0,-1.0 Z" fill="#7fb6ee"/><path d="M2,-4 h6" fill="none" stroke="#7fb6ee" stroke-width="2.2" /><circle cx="13" cy="-11" r="9" fill="#ee7733" stroke="#fff" stroke-width="2"/><path d="M22,21 h-8 l8,-8 Z" fill="#9b9ea3"/></g><g transform="translate(250,1176)"><rect x="-15" y="-10" width="31" height="21" fill="none" stroke="#e4e4e4" stroke-width="2.4" /><path d="M2,-10 V11" fill="none" stroke="#e4e4e4" stroke-width="2.2" /><circle cx="-7" cy="0.5" r="4.5" fill="none" stroke="#f4f4f4" stroke-width="2.2"/><path d="M-14,0.500 H0 M-7,-7 V8" fill="none" stroke="#f4f4f4" stroke-width="2" /><text x="9" y="7" font-family="Liberation Sans, sans-serif" font-size="15" font-weight="bold" fill="#f4f4f4" text-anchor="middle" letter-spacing="0">.1</text></g><g transform="translate(294,1176)"><path d="M-15,-15 V15 M15,-15 V15" fill="none" stroke="#e4e4e4" stroke-width="2.4" /><path d="M-13.0,-8.0 L8.8,-8.0" stroke="#d6d6d6" stroke-width="2.2" fill="none"/><path d="M13.0,-8.0 L7.0,-4.5 L7.0,-11.5 Z" fill="#d6d6d6"/><path d="M-13.0,-8.0 L-7.0,-11.5 L-7.0,-4.5 Z" fill="#d6d6d6"/><path d="M-7,6 l5,5 l10,-11" fill="none" stroke="#7fd68a" stroke-width="4" /></g><g transform="translate(338,1176)"><path d="M-15,-5 L-5,-15 M5,15 L15,5" fill="none" stroke="#e4e4e4" stroke-width="2.4" /><path d="M-10.0,-10.0 L7.0,7.0" stroke="#d6d6d6" stroke-width="2.2" fill="none"/><path d="M10.0,10.0 L3.3,8.2 L8.2,3.3 Z" fill="#d6d6d6"/><path d="M-10.0,-10.0 L-3.3,-8.2 L-8.2,-3.3 Z" fill="#d6d6d6"/><text x="7" y="-2" font-family="Liberation Sans, sans-serif" font-size="16" font-weight="bold" fill="#7fb6ee" text-anchor="middle" letter-spacing="0">x</text><path d="M22,21 h-8 l8,-8 Z" fill="#9b9ea3"/></g>
<g transform="translate(52,1298)"><g transform="translate(0,0) scale(1)"><path d="M-27,22 L-5,-15 H3" fill="none" stroke="#e0e0e0" stroke-width="2.4" /><path d="M-32,31 L-31,16 L-21,23 Z" fill="#e0e0e0" /><circle cx="17" cy="-15" r="14" fill="none" stroke="#e0e0e0" stroke-width="2.6"/></g><circle cx="34" cy="-35" r="9.500" fill="#ee7733" stroke="#fff" stroke-width="2"/></g><g transform="translate(140,1298)"><g transform="translate(0,0) scale(1)"><path d="M-27,22 L-5,-15 H3" fill="none" stroke="#e0e0e0" stroke-width="2.4" /><path d="M-32,31 L-31,16 L-21,23 Z" fill="#e0e0e0" /><circle cx="17" cy="-15" r="14" fill="none" stroke="#e0e0e0" stroke-width="2.6"/></g><g transform="translate(-4,32) scale(1.0)"><path d="M0,0 c4,-10 10,-15 17,-17 l5,5 c-2,7 -7,12 -22,12 Z" fill="#e8c39a" stroke="#3b4453" stroke-width="1"/><path d="M19,-19 l10,-10 l6,6 l-10,10 Z" fill="#f4f4f4" stroke="#3b4453" stroke-width="1"/></g></g><g transform="translate(206,1276)"><path d="M-5,12 L2,-1 L9,12 M2,-1 L6,-5" fill="none" stroke="#e0e0e0" stroke-width="2.2" /><path d="M-9,17 l1,-8 l6,4 Z" fill="#e0e0e0" /><path d="M13,17 l-1,-8 l-6,4 Z" fill="#e0e0e0" /><circle cx="11" cy="-7" r="4.5" fill="none" stroke="#e0e0e0" stroke-width="2.2"/><path d="M-8,-17 V-3 M-15,-10 H-1" fill="none" stroke="#7fd68a" stroke-width="4.2" /></g><g transform="translate(250,1276)"><path d="M-12,-3 L-6,-12 H2 M-8,11 L-2,0 H3" fill="none" stroke="#e0e0e0" stroke-width="2.2" /><path d="M-16,2 l1,-8 l6,4 Z" fill="#e0e0e0" /><path d="M-12,16 l1,-8 l6,4 Z" fill="#e0e0e0" /><circle cx="7" cy="-12" r="4.5" fill="none" stroke="#e0e0e0" stroke-width="2.2"/><circle cx="7" cy="0" r="4.5" fill="none" stroke="#e0e0e0" stroke-width="2.2"/><path d="M16,-17 V16" fill="none" stroke="#8fc4f7" stroke-width="2.4" /></g><g transform="translate(294,1276)"><path d="M-12,8 L-4,-6 H2" fill="none" stroke="#e0e0e0" stroke-width="2.2" /><path d="M-16,14 l1,-9 l7,5 Z" fill="#e0e0e0" /><circle cx="9" cy="-7" r="6" fill="none" stroke="#e0e0e0" stroke-width="2.2"/><path transform="translate(8,9) scale(0.9)" d="M3,-9 l-9,10 h6 l-3,8 l10,-11 h-6 l4,-7 Z" fill="#f2c867"/></g><g transform="translate(206,1320)"><path d="M-5,12 L2,-1 L9,12 M2,-1 L6,-5" fill="none" stroke="#e0e0e0" stroke-width="2.2" /><path d="M-9,17 l1,-8 l6,4 Z" fill="#e0e0e0" /><path d="M13,17 l-1,-8 l-6,4 Z" fill="#e0e0e0" /><circle cx="11" cy="-7" r="4.5" fill="none" stroke="#e0e0e0" stroke-width="2.2"/><path d="M-14,-16 L-2,-4 M-2,-16 L-14,-4" fill="none" stroke="#e0645a" stroke-width="4.2" /></g><g transform="translate(250,1320)"><path d="M-10,10 L-3,-4 H2" fill="none" stroke="#e0e0e0" stroke-width="2.2" /><path d="M-15,16 l1,-9 l7,5 Z" fill="#e0e0e0" /><circle cx="9" cy="-7" r="6" fill="none" stroke="#e0e0e0" stroke-width="2.2"/><circle cx="9" cy="6" r="6" fill="none" stroke="#e0e0e0" stroke-width="2.2"/></g><g transform="translate(52,1442)"><rect x="-30" y="-26" width="60" height="52" fill="none" stroke="#e0e0e0" stroke-width="2.2" /><path d="M-30,-13.0 h60" fill="none" stroke="#e0e0e0" stroke-width="2.2" /><path d="M-30,0.0 h60" fill="none" stroke="#e0e0e0" stroke-width="2.2" /><path d="M-30,13.0 h60" fill="none" stroke="#e0e0e0" stroke-width="2.2" /><path d="M-10.0,-13.0 V26" fill="none" stroke="#e0e0e0" stroke-width="2.2" /><path d="M10.0,-13.0 V26" fill="none" stroke="#e0e0e0" stroke-width="2.2" /></g><g transform="translate(140,1442)"><rect x="-31" y="-31" width="54" height="52" fill="none" stroke="#e0e0e0" stroke-width="2.2" /><path d="M-31,-18.0 h54" fill="none" stroke="#e0e0e0" stroke-width="2.2" /><path d="M-31,-5.0 h54" fill="none" stroke="#e0e0e0" stroke-width="2.2" /><path d="M-31,8.0 h54" fill="none" stroke="#e0e0e0" stroke-width="2.2" /><path d="M-13.0,-18.0 V21" fill="none" stroke="#e0e0e0" stroke-width="2.2" /><path d="M5.0,-18.0 V21" fill="none" stroke="#e0e0e0" stroke-width="2.2" /><g transform="translate(-4,32) scale(1.0)"><path d="M0,0 c4,-10 10,-15 17,-17 l5,5 c-2,7 -7,12 -22,12 Z" fill="#e8c39a" stroke="#3b4453" stroke-width="1"/><path d="M19,-19 l10,-10 l6,6 l-10,10 Z" fill="#f4f4f4" stroke="#3b4453" stroke-width="1"/></g></g><g transform="translate(206,1420)"><path d="M-15,-13 h20 l8,8 v17 h-28 Z" fill="#d6d6d6" /><path d="M5,-13 v8 h8 Z" fill="#f4f4f4" /><path d="M-7,-6 h14 M-7,-1 h14 M-7,4 h14 M-2,-6 v10 M3,-6 v10" stroke="#9a9da3" stroke-width="1.800" fill="none"/><rect x="-2" y="0" width="18" height="15" fill="#f4f4f4" stroke="#3b4453" stroke-width="1"/><rect x="-2" y="0" width="18" height="4" fill="#9a9da3"/><path d="M2,7.500 h2.500 M6.500,7.500 h7 M2,11.500 h2.500 M6.500,11.500 h7" stroke="#444" stroke-width="1.800"/><g transform="translate(-12,-6)"><rect x="-3" y="-9" width="6" height="9.500" rx="3" fill="none" stroke="#3b4453" stroke-width="4.500"/><rect x="-3" y="-0.500" width="6" height="9.500" rx="3" fill="none" stroke="#3b4453" stroke-width="4.500"/><rect x="-3" y="-9" width="6" height="9.500" rx="3" fill="none" stroke="#e8b98a" stroke-width="2.400"/><rect x="-3" y="-0.500" width="6" height="9.500" rx="3" fill="none" stroke="#e8b98a" stroke-width="2.400"/></g></g><g transform="translate(250,1420)"><path d="M-15,-13 h20 l8,8 v14 h-28 Z" fill="#d6d6d6" /><path d="M5,-13 v8 h8 Z" fill="#f4f4f4" /><path d="M-8,-6 h14 M-8,-1 h14 M-8,4 h14 M-3,-6 v10 M2,-6 v10" stroke="#9a9da3" stroke-width="1.800" fill="none"/><path d="M5,2 h7 v6 h4 l-7.500,8 l-7.500,-8 h4 Z" fill="#6fb0ee" stroke="#3b4453" stroke-width="1"/><g transform="translate(-12,-6)"><rect x="-3" y="-9" width="6" height="9.500" rx="3" fill="none" stroke="#3b4453" stroke-width="4.500"/><rect x="-3" y="-0.500" width="6" height="9.500" rx="3" fill="none" stroke="#3b4453" stroke-width="4.500"/><rect x="-3" y="-9" width="6" height="9.500" rx="3" fill="none" stroke="#e8b98a" stroke-width="2.400"/><rect x="-3" y="-0.500" width="6" height="9.500" rx="3" fill="none" stroke="#e8b98a" stroke-width="2.400"/></g></g><g transform="translate(206,1464)"><rect x="-17" y="-15" width="18" height="16" fill="#f4f4f4"/><path d="M-14,-11 h2.500 M-10,-11 h7 M-14,-7.5 h2.500 M-10,-7.5 h7 M-14,-4 h2.500 M-10,-4 h7" stroke="#3f7fd9" stroke-width="2"/><text x="9" y="-2" font-family="Liberation Sans, sans-serif" font-size="17" font-weight="bold" fill="#8fc4f7" text-anchor="middle">A</text><rect x="-2" y="0" width="18" height="7" fill="#8fc4f7"/><rect x="-8" y="8" width="24" height="8" fill="#d6d6d6"/></g><g transform="translate(250,1464)"><rect x="-15" y="-6" width="30" height="22" fill="#d6d6d6"/><path d="M-9,-2 h14 M-9,3 h14 M-9,8 h14 M-4,-2 v10 M1,-2 v10" stroke="#9a9da3" stroke-width="1.800" fill="none"/><circle cx="8" cy="-8" r="9" fill="#3b4453"/><g transform="translate(8,-8)"><path d="M-6.5,0 a6.5,6.5 0 0 1 11.0,-4.5" fill="none" stroke="#7fd68a" stroke-width="3"/><path d="M6.5,0 a6.5,6.5 0 0 1 -11.0,4.5" fill="none" stroke="#7fd68a" stroke-width="3"/><path d="M1.3,-7.2 l5.9,0.7 l-0.7,5.9 Z" fill="#7fd68a"/><path d="M-1.3,7.2 l-5.9,-0.7 l0.7,-5.9 Z" fill="#7fd68a"/></g><g transform="translate(-12,-7)"><rect x="-3" y="-9" width="6" height="9.500" rx="3" fill="none" stroke="#3b4453" stroke-width="4.500"/><rect x="-3" y="-0.500" width="6" height="9.500" rx="3" fill="none" stroke="#3b4453" stroke-width="4.500"/><rect x="-3" y="-9" width="6" height="9.500" rx="3" fill="none" stroke="#e8b98a" stroke-width="2.400"/><rect x="-3" y="-0.500" width="6" height="9.500" rx="3" fill="none" stroke="#e8b98a" stroke-width="2.400"/></g></g><g transform="translate(52,1586)"><path d="M-29,-32 V26" fill="none" stroke="#e57a6c" stroke-width="2.4" /><path d="M-24,29 H32" fill="none" stroke="#f0f0f0" stroke-width="2.4" /><rect x="-32" y="26" width="6" height="6" fill="#e0646a"/><path d="M42,42 h-8 l8,-8 Z" fill="#9b9ea3"/></g><g transform="translate(118,1564)"><rect x="-16" y="-2" width="13" height="9" fill="#d6d6d6"/><rect x="-2" y="-16" width="12" height="10" fill="#8fc4f7"/><path d="M-3,-16 V7" fill="none" stroke="#e57a6c" stroke-width="2.4" /><path transform="translate(9,8) scale(1.0)" d="M3,-9 l-9,10 h6 l-3,8 l10,-11 h-6 l4,-7 Z" fill="#f2c867"/></g><g transform="translate(162,1564)"><path d="M-10,-16 h-6 v26 h6 M6,-16 h6 v12" fill="none" stroke="#f0f0f0" stroke-width="2.2" /><path d="M-8,-4 L3,8" fill="none" stroke="#e27d86" stroke-width="2.4" /><path d="M-2,1 L6,-10" fill="none" stroke="#d8d0d4" stroke-width="2.2" /><g transform="translate(9,6) scale(1)"><circle cx="0" cy="0" r="6.5" fill="#f2c867" stroke="#3b4453" stroke-width="0.8"/><rect x="-3" y="5.5" width="6" height="4.500" rx="1.500" fill="#f4f4f4"/></g></g><g transform="translate(118,1608)"><path d="M-10,-16 h-6 v26 h6 M6,-16 h6 v12" fill="none" stroke="#f0f0f0" stroke-width="2.2" /><path d="M-8,-4 L3,8" fill="none" stroke="#e27d86" stroke-width="2.4" /><path d="M-2,1 L6,-10" fill="none" stroke="#d8d0d4" stroke-width="2.2" /><g transform="translate(9,6)"><path d="M0,-6.500 a6.500,6.500 0 0 0 0,13 Z" fill="#f2c867"/><path d="M0,-6.500 a6.500,6.500 0 0 1 0,13 Z" fill="#7fd6de"/><rect x="-3" y="5.500" width="6" height="4.500" rx="1.500" fill="#f4f4f4"/></g></g><g transform="translate(162,1608)"><path d="M-10,-16 h-6 v26 h6 M6,-16 h6 v12" fill="none" stroke="#f0f0f0" stroke-width="2.2" /><path d="M-8,-4 L3,8" fill="none" stroke="#e27d86" stroke-width="2.4" /><path d="M-2,1 L6,-10" fill="none" stroke="#d8d0d4" stroke-width="2.2" /><g transform="translate(9,6) scale(1)"><circle cx="0" cy="0" r="6.5" fill="#7fd6de" stroke="#3b4453" stroke-width="0.8"/><rect x="-3" y="5.5" width="6" height="4.500" rx="1.500" fill="#f4f4f4"/></g></g><g transform="translate(228,1586)"><path d="M-31,-32 V31 M31,-32 V31" fill="none" stroke="#e0e0e0" stroke-width="2.4" /><path d="M-29.0,-19.0 L23.4,-19.0" stroke="#e0e0e0" stroke-width="2.4" fill="none"/><path d="M29.0,-19.0 L21.0,-14.0 L21.0,-24.0 Z" fill="#e0e0e0"/><path d="M-29.0,-19.0 L-21.0,-24.0 L-21.0,-14.0 Z" fill="#e0e0e0"/><path d="M-8,8 v-8 a8,8 0 0 1 16,0 v8" fill="none" stroke="#f2c867" stroke-width="5"/><rect x="-13" y="7" width="26" height="22" fill="#f2c867"/><rect x="-1.200" y="13" width="2.400" height="8" fill="#333"/><path d="M42,42 h-8 l8,-8 Z" fill="#9b9ea3"/></g><g transform="translate(294,1564)"><path d="M-16,-16 v30 M14,-16 v30" fill="none" stroke="#e0e0e0" stroke-width="2.2" /><path d="M-14.0,-9.0 L7.8,-9.0" stroke="#e0e0e0" stroke-width="2" fill="none"/><path d="M12.0,-9.0 L6.0,-5.5 L6.0,-12.5 Z" fill="#e0e0e0"/><path d="M-14.0,-9.0 L-8.0,-12.5 L-8.0,-5.5 Z" fill="#e0e0e0"/><path d="M-6,8 a6,6 0 0 1 6,-10" fill="none" stroke="#6fb0ee" stroke-width="2.400"/><path d="M-2,-5 l5,3 l-5,3 Z" fill="#6fb0ee"/><path d="M6,-2 a6,6 0 0 1 -6,11" fill="none" stroke="#e8606a" stroke-width="2.400"/><path d="M2,12 l-5,-3 l5,-3 Z" fill="#e8606a"/></g><g transform="translate(338,1564)"><path d="M-16,-16 v30 M10,-16 v30" fill="none" stroke="#e0e0e0" stroke-width="2.2" /><path d="M-14.0,-9.0 L3.8,-9.0" stroke="#e0e0e0" stroke-width="2" fill="none"/><path d="M8.0,-9.0 L2.0,-5.5 L2.0,-12.5 Z" fill="#e0e0e0"/><path d="M-14.0,-9.0 L-8.0,-12.5 L-8.0,-5.5 Z" fill="#e0e0e0"/><g transform="translate(10,5) scale(1)"><circle cx="0" cy="0" r="6.5" fill="#f2c867" stroke="#3b4453" stroke-width="0.8"/><rect x="-3" y="5.5" width="6" height="4.500" rx="1.500" fill="#f4f4f4"/></g></g><g transform="translate(294,1608)"><path d="M-16,-16 v30 M10,-16 v30" fill="none" stroke="#e0e0e0" stroke-width="2.2" /><path d="M-14.0,-9.0 L3.8,-9.0" stroke="#e0e0e0" stroke-width="2" fill="none"/><path d="M8.0,-9.0 L2.0,-5.5 L2.0,-12.5 Z" fill="#e0e0e0"/><path d="M-14.0,-9.0 L-8.0,-12.5 L-8.0,-5.5 Z" fill="#e0e0e0"/><g transform="translate(10,5)"><path d="M0,-6.500 a6.500,6.500 0 0 0 0,13 Z" fill="#f2c867"/><path d="M0,-6.500 a6.500,6.500 0 0 1 0,13 Z" fill="#7fd6de"/><rect x="-3" y="5.500" width="6" height="4.500" rx="1.500" fill="#f4f4f4"/></g></g><g transform="translate(338,1608)"><path d="M-16,-16 v30 M10,-16 v30" fill="none" stroke="#e0e0e0" stroke-width="2.2" /><path d="M-14.0,-9.0 L3.8,-9.0" stroke="#e0e0e0" stroke-width="2" fill="none"/><path d="M8.0,-9.0 L2.0,-5.5 L2.0,-12.5 Z" fill="#e0e0e0"/><path d="M-14.0,-9.0 L-8.0,-12.5 L-8.0,-5.5 Z" fill="#e0e0e0"/><g transform="translate(10,5) scale(1)"><circle cx="0" cy="0" r="6.5" fill="#7fd6de" stroke="#3b4453" stroke-width="0.8"/><rect x="-3" y="5.5" width="6" height="4.500" rx="1.500" fill="#f4f4f4"/></g></g>
<path d="M42,1699 v26 M29,1712 h26" stroke="#e8e8e8" stroke-width="2.200"/>
<path d="M96,1701 h18 M90,1707 h24 M88,1713 h26 M96,1721 h18" stroke="#e8e8e8" stroke-width="2.200"/><path d="M88,1721 h18" stroke="#e8e8e8" stroke-width="3.500"/><path d="M107,1719 l3,-4 l3,4 Z" fill="#e8e8e8"/>
</svg>
<div class="abs" style="left:2552px;top:159px;width:472px;height:1527px;background:#3b4453"></div>
<div class="abs" style="left:2656px;top:159px;width:368px;height:47px;background:#262c37"></div>
<div class="abs" style="left:2657px;top:160px;width:103px;height:44px;background:#2f3542"></div>
<div class="abs" style="left:2762px;top:160px;width:103px;height:44px;background:#2f3542"></div>
<div class="abs" style="left:2867px;top:160px;width:108px;height:44px;background:#2f3542"></div>
<div class="abs" style="left:2976px;top:164px;width:48px;height:40px;background:#3b4453"></div>
<svg style="left:2584px;top:164px" width="44" height="38" viewBox="0 0 44 38"><path d="M14,17.0 h19 l-10,9 h-19 Z" fill="#dcdcdc" stroke="#3b4453" stroke-width="1.3"/><path d="M14,10.5 h19 l-10,9 h-19 Z" fill="#dcdcdc" stroke="#3b4453" stroke-width="1.3"/><path d="M14,4.0 h19 l-10,9 h-19 Z" fill="#dcdcdc" stroke="#3b4453" stroke-width="1.3"/><circle cx="31" cy="27" r="8" fill="#f2f2f2" stroke="#3b4453" stroke-width="1.5"/><path d="M31,25.500 v6" stroke="#333" stroke-width="2.400"/><circle cx="31" cy="22.500" r="1.400" fill="#333"/></svg>
<svg style="left:2692px;top:163px" width="36" height="36" viewBox="0 0 36 36"><path d="M4,14 h20 l7,7 v12 h-27 Z" fill="#dcdcdc"/><path d="M24,14 v7 h7 Z" fill="#2f3542"/><path d="M25.500,14.500 v5 h5 Z" fill="#f2f2f2"/><path d="M9,14 v-5 a2.200,2.200 0 0 1 4.400,0 v7 a4.600,4.600 0 0 1 -9.200,0 v-8 a4.600,4.600 0 0 1 4.600,-4.600" fill="none" stroke="#2f3542" stroke-width="5" stroke-linecap="round"/><path d="M9,14 v-5 a2.200,2.200 0 0 1 4.400,0 v7 a4.600,4.600 0 0 1 -9.200,0 v-8 a4.600,4.600 0 0 1 4.600,-4.600" fill="none" stroke="#f2f2f2" stroke-width="2.400" stroke-linecap="round"/></svg>
<svg style="left:2800px;top:166px" width="30" height="30" viewBox="0 0 30 30"><rect x="1" y="1" width="28" height="27" fill="#dcdcdc"/><rect x="1" y="1" width="28" height="6" fill="#a9acb1"/><rect x="3" y="2.500" width="4" height="2" fill="#444"/><rect x="5" y="10" width="6" height="6" fill="#555b66"/><rect x="5" y="18" width="6" height="6" fill="#555b66"/><rect x="13" y="10" width="6" height="6" fill="#8e9299"/><rect x="13" y="18" width="6" height="6" fill="#8e9299"/><rect x="21" y="10" width="6" height="6" fill="#8e9299"/><rect x="21" y="18" width="6" height="6" fill="#8e9299"/><rect x="4" y="25" width="22" height="1.500" fill="#999"/></svg>
<svg style="left:2993px;top:176px" width="16" height="12"><path d="M1.500,1 l4.500,4.800 l-4.500,4.800 M8.500,1 l4.500,4.800 l-4.500,4.800" fill="none" stroke="#9aa0a9" stroke-width="1.600"/></svg>
<div class="t" style="left:2573px;top:212px;font-size:22.500px;font-weight:700;color:#f2f2f2">图层</div>
<svg style="left:2971px;top:207px" width="28" height="27"><path d="M11,5 v-3.500 h15 v24 h-15 v-3.500" fill="none" stroke="#e6e6e6" stroke-width="2.200"/><path d="M19,1.500 v24" stroke="#e6e6e6" stroke-width="2"/><path d="M4,13.500 h14" stroke="#8fc4f7" stroke-width="2.600"/><path d="M0,13.500 l7,-5 v10 Z" fill="#8fc4f7"/></svg>
<svg style="left:2576px;top:267px" width="40" height="40" viewBox="0 0 40 40"><path d="M15,25 h20 l-12,11 h-20 Z" fill="#dcdcdc" stroke="#3b4453" stroke-width="1.3"/><path d="M15,19 h20 l-12,11 h-20 Z" fill="#dcdcdc" stroke="#3b4453" stroke-width="1.3"/><path d="M15,13 h20 l-12,11 h-20 Z" fill="#8fc4f7" stroke="#3b4453" stroke-width="1.3"/><circle cx="20" cy="10" r="7" fill="#dcdcdc" stroke="#3b4453" stroke-width="1.2"/></svg>
<svg style="left:2623px;top:267px" width="40" height="40" viewBox="0 0 40 40"><path d="M14,16 h19 l-12,11 h-19 Z" fill="#dcdcdc" stroke="#3b4453" stroke-width="1.3"/><path d="M14,10 h19 l-12,11 h-19 Z" fill="#dcdcdc" stroke="#3b4453" stroke-width="1.3"/><path d="M14,4 h19 l-12,11 h-19 Z" fill="#dcdcdc" stroke="#3b4453" stroke-width="1.3"/><g transform="translate(22,24) rotate(40)"><rect x="0" y="-3.500" width="12" height="7" fill="#f2c867" stroke="#3b4453" stroke-width="1"/><rect x="12" y="-5" width="4" height="10" fill="#f2f2f2"/><rect x="16" y="-2" width="5" height="4" fill="#f2f2f2"/></g></svg>
<svg style="left:2673px;top:267px" width="40" height="40" viewBox="0 0 40 40"><path d="M18,24 h19 l-12,11 h-19 Z" fill="#dcdcdc" stroke="#3b4453" stroke-width="1.3"/><path d="M18,18 h19 l-12,11 h-19 Z" fill="#dcdcdc" stroke="#3b4453" stroke-width="1.3"/><path d="M18,12 h19 l-12,11 h-19 Z" fill="#dcdcdc" stroke="#3b4453" stroke-width="1.3"/><path d="M2,9 l9,-7 v4.500 c7,0 12,3 13,9 c-3,-4 -7,-5 -13,-5 v4.500 Z" fill="#6fb0ee" stroke="#3b4453" stroke-width="1"/></svg>
<svg style="left:2719px;top:267px" width="40" height="40" viewBox="0 0 40 40"><path d="M14,17 h19 l-12,11 h-19 Z" fill="#8fc4f7" stroke="#3b4453" stroke-width="1.3"/><path d="M14,11 h19 l-12,11 h-19 Z" fill="#dcdcdc" stroke="#3b4453" stroke-width="1.3"/><path d="M14,5 h19 l-12,11 h-19 Z" fill="#dcdcdc" stroke="#3b4453" stroke-width="1.3"/><path d="M34,19 L22,31" stroke="#3b4453" stroke-width="5"/><path d="M34,19 L23,30" stroke="#f2f2f2" stroke-width="2.600"/><path d="M19,34 l2,-10 l8,8 Z" fill="#f2f2f2"/></svg>
<svg style="left:2768px;top:267px" width="40" height="40" viewBox="0 0 40 40"><path d="M14,17 h19 l-12,11 h-19 Z" fill="#8fc4f7" stroke="#3b4453" stroke-width="1.3"/><path d="M14,11 h19 l-12,11 h-19 Z" fill="#dcdcdc" stroke="#3b4453" stroke-width="1.3"/><path d="M14,5 h19 l-12,11 h-19 Z" fill="#dcdcdc" stroke="#3b4453" stroke-width="1.3"/><path d="M22,33 L33,22" stroke="#3b4453" stroke-width="5"/><path d="M22,33 L33,22" stroke="#f2f2f2" stroke-width="2.600"/><path d="M37,18 l-2,10 l-8,-8 Z" fill="#f2f2f2"/></svg>
<svg style="left:2816px;top:267px" width="40" height="40" viewBox="0 0 40 40"><path d="M15,6 h17 l-12,11 h-17 Z" fill="#dcdcdc"/><g transform="translate(25,25)"><path d="M0,-8.500 v17 M-2.800,-6.500 l2.800,2.800 l2.800,-2.800 M-2.800,6.500 l2.800,-2.800 l2.800,2.800" transform="rotate(0)" stroke="#7fd6de" stroke-width="2" fill="none"/><path d="M0,-8.500 v17 M-2.800,-6.500 l2.800,2.800 l2.800,-2.800 M-2.800,6.500 l2.800,-2.800 l2.800,2.800" transform="rotate(60)" stroke="#7fd6de" stroke-width="2" fill="none"/><path d="M0,-8.500 v17 M-2.800,-6.500 l2.800,2.800 l2.800,-2.800 M-2.800,6.500 l2.800,-2.800 l2.800,2.800" transform="rotate(120)" stroke="#7fd6de" stroke-width="2" fill="none"/></g></svg>
<svg style="left:2864px;top:267px" width="40" height="40" viewBox="0 0 40 40"><path d="M15,6 h17 l-12,11 h-17 Z" fill="#dcdcdc"/><circle cx="27" cy="22" r="6.500" fill="#7fd6de"/><rect x="24" y="28" width="6" height="5" rx="2" fill="#f2f2f2"/></svg>
<svg style="left:2913px;top:267px" width="40" height="40" viewBox="0 0 40 40"><path d="M15,6 h17 l-12,11 h-17 Z" fill="#dcdcdc"/><path d="M23.500,24 v-4 a4,4 0 0 1 8,0 v4" fill="none" stroke="#7fd6de" stroke-width="2.400"/><rect x="20.500" y="23" width="14" height="11" fill="#7fd6de"/><rect x="26.700" y="26" width="1.600" height="4.500" fill="#3b4453"/></svg>
<svg style="left:2961px;top:267px" width="40" height="40" viewBox="0 0 40 40"><path d="M13,6 h17 l-12,11 h-17 Z" fill="#dcdcdc"/><path d="M26,24 v-5 a4,4 0 0 1 8,0 v2" fill="none" stroke="#f2c867" stroke-width="2.400"/><rect x="17" y="23" width="14" height="11" fill="#f2c867"/><rect x="23.200" y="26" width="1.600" height="4.500" fill="#3b4453"/></svg>
<div class="abs" style="left:2571px;top:326px;width:438px;height:50px;background:#4b566c;border:2px solid #2f3643;border-radius:5px"></div>
<div class="abs" style="left:2591px;top:342px;width:17px;height:17px;border-radius:50%;background:#d9d9d9"></div>
<svg style="left:2624px;top:339px" width="20" height="24"><path d="M5,11 v-4 a4.500,4.500 0 0 1 9,0 v4" fill="none" stroke="#687184" stroke-width="2"/><rect x="2.500" y="11" width="14" height="10" fill="#687184"/></svg>
<svg style="left:2657px;top:340px" width="22" height="22"><g transform="translate(11,11)"><path d="M0,-9 v18 M-3,-6 l3,3 l3,-3 M-3,6 l3,-3 l3,3" transform="rotate(0)" stroke="#687184" stroke-width="1.800" fill="none"/><path d="M0,-9 v18 M-3,-6 l3,3 l3,-3 M-3,6 l3,-3 l3,3" transform="rotate(60)" stroke="#687184" stroke-width="1.800" fill="none"/><path d="M0,-9 v18 M-3,-6 l3,3 l3,-3 M-3,6 l3,-3 l3,3" transform="rotate(120)" stroke="#687184" stroke-width="1.800" fill="none"/></g></svg>
<div class="abs" style="left:2692px;top:342px;width:18px;height:18px;background:#fff;border:2px solid #000"></div>
<div class="t" style="left:2734px;top:338px;font-size:26px;color:#f4f4f4">0</div>
<svg style="left:2987px;top:346px" width="14" height="10"><path d="M0,0 h13.500 l-6.750,9 Z" fill="#d9dbde"/></svg>
<div class="abs" style="left:2573px;top:382px;width:434px;height:50px;background:#4b566c;border:2px solid #2f3643;border-radius:5px"></div>
<div class="t" style="left:2586px;top:395px;font-size:21.700px;font-weight:500;color:#f4f4f4">未保存的图层状态</div>
<svg style="left:2985px;top:402px" width="14" height="10"><path d="M0,0 h13.500 l-6.750,9 Z" fill="#d9dbde"/></svg>
<svg style="left:2584px;top:448px" width="14" height="20"><path d="M2,2 l8,8 l-8,8" fill="none" stroke="#e0e0e0" stroke-width="2.400"/></svg>
<div class="t" style="left:2621px;top:448px;font-size:21.400px;font-weight:500;color:#d4d7db">显示图层列表</div>
<div class="abs" style="left:2552px;top:503px;width:472px;height:2px;background:#272d39"></div>
<div class="t" style="left:2573px;top:511px;font-size:22.500px;font-weight:700;color:#f2f2f2">特性</div>
<div class="abs" style="left:2792px;top:507px;width:120px;height:28px;background:#3f4859;border:1.500px solid #272d39;border-radius:3px"></div>
<div class="abs" style="left:2850px;top:508.500px;width:60.500px;height:25px;background:#4b566c;border-left:1.500px solid #272d39"></div>
<div class="t" style="left:2806px;top:513px;font-size:16px;color:#9399a3">全部</div>
<div class="t" style="left:2866px;top:513px;font-size:16px;color:#f4f4f4;font-weight:bold">我的</div>
<svg style="left:2931px;top:507px" width="30" height="28"><path d="M17,24 h-15 v-22 h19 v8" fill="none" stroke="#e6e6e6" stroke-width="2.200"/><path d="M5,8 h12 M5,13 h12 M5,18 h8" stroke="#e6e6e6" stroke-width="2"/><g transform="translate(13,27) rotate(-45)"><path d="M0,0 l4,-3.500 h13 v7 h-13 Z" fill="#e6e6e6" stroke="#3b4453" stroke-width="1"/></g></svg>
<svg style="left:2974px;top:507px" width="28" height="27"><path d="M11,5 v-3.500 h15 v24 h-15 v-3.500" fill="none" stroke="#e6e6e6" stroke-width="2.200"/><path d="M19,1.500 v24" stroke="#e6e6e6" stroke-width="2"/><path d="M4,13.500 h14" stroke="#8fc4f7" stroke-width="2.600"/><path d="M0,13.500 l7,-5 v10 Z" fill="#8fc4f7"/></svg>
<div class="abs" style="left:2573px;top:554px;width:430px;height:40px;background:#465064;border:1.500px solid #3a4353;border-radius:4px"></div>
<div class="t" style="left:2586px;top:563px;font-size:21.300px;color:#8e949e">模型空间</div>
<svg style="left:2981px;top:570px" width="14" height="10"><path d="M0,0 h13.500 l-6.750,9 Z" fill="#7d8491"/></svg>
<div class="abs" style="left:2573px;top:605px;width:431px;height:44px;border:1.500px solid #465062;border-radius:3px"></div>
<div class="t" style="right:264px;top:615.7px;font-size:21.500px;color:#d6d9dd;font-weight:500">颜色</div>
<div class="abs" style="left:2782px;top:609.5px;width:214px;height:34.500px;background:#4b566c;border:2px solid #2b313d;border-radius:4.500px"></div>
<div class="abs" style="left:2799.500px;top:617.7px;width:18.500px;height:18.500px;background:#fff;border:2px solid #000"></div>
<div class="t" style="left:2838px;top:615.7px;font-size:22.400px;color:#f4f4f4;-webkit-text-stroke:.35px #f4f4f4">ByLayer</div>
<svg style="left:2975px;top:621.7px" width="14" height="10"><path d="M0,0 h13.500 l-6.750,9 Z" fill="#d9dbde"/></svg>
<div class="t" style="right:264px;top:661.7px;font-size:21.500px;color:#d6d9dd;font-weight:500">图层</div>
<div class="abs" style="left:2782px;top:655.5px;width:214px;height:34.500px;background:#4b566c;border:2px solid #2b313d;border-radius:4.500px"></div>
<div class="t" style="left:2794px;top:661.7px;font-size:22.400px;color:#f4f4f4;-webkit-text-stroke:.35px #f4f4f4">0</div>
<svg style="left:2975px;top:667.74px" width="14" height="10"><path d="M0,0 h13.500 l-6.750,9 Z" fill="#d9dbde"/></svg>
<div class="t" style="right:264px;top:707.8px;font-size:21.500px;color:#d6d9dd;font-weight:500">线型</div>
<div class="abs" style="left:2782px;top:701.6px;width:214px;height:34.500px;background:#4b566c;border:2px solid #2b313d;border-radius:4.500px"></div>
<div class="abs" style="left:2796px;top:719.8px;width:65px;height:2px;background:#f0f0f0"></div>
<div class="t" style="left:2888px;top:707.8px;font-size:22.400px;color:#f4f4f4;-webkit-text-stroke:.35px #f4f4f4">ByLa...</div>
<svg style="left:2975px;top:713.7800000000001px" width="14" height="10"><path d="M0,0 h13.500 l-6.750,9 Z" fill="#d9dbde"/></svg>
<div class="t" style="right:264px;top:753.8px;font-size:21.500px;color:#d6d9dd;font-weight:500">线型比例</div>
<div class="abs" style="left:2782px;top:747.6px;width:214px;height:34.500px;background:#4b566c;border:2px solid #2b313d;border-radius:4.500px"></div>
<div class="t" style="left:2788px;top:753.8px;font-size:22.400px;color:#f4f4f4;-webkit-text-stroke:.35px #f4f4f4">1</div>
<div class="t" style="right:264px;top:799.9px;font-size:21.500px;color:#d6d9dd;font-weight:500">线宽</div>
<div class="abs" style="left:2782px;top:793.7px;width:214px;height:34.500px;background:#4b566c;border:2px solid #2b313d;border-radius:4.500px"></div>
<div class="t" style="left:2794px;top:799.9px;font-size:22.400px;color:#f4f4f4;-webkit-text-stroke:.35px #f4f4f4">ByLayer</div>
<svg style="left:2975px;top:805.86px" width="14" height="10"><path d="M0,0 h13.500 l-6.750,9 Z" fill="#d9dbde"/></svg>
<div class="t" style="right:264px;top:845.9px;font-size:21.500px;color:#d6d9dd;font-weight:500">透明度</div>
<div class="abs" style="left:2786px;top:839.7px;width:125px;height:34.500px;background:#4b566c;border:2px solid #2b313d;border-radius:4.500px"></div>
<div class="abs" style="left:2787px;top:842.7px;width:2.500px;height:28px;background:#6e9be0;border-radius:2px"></div>
<div class="abs" style="left:2846px;top:856.7px;width:1.500px;height:12px;background:#737b8a"></div>
<div class="t" style="left:2892px;top:845.9px;font-size:22.400px;color:#f4f4f4;-webkit-text-stroke:.35px #f4f4f4">0</div>
<div class="abs" style="left:2920px;top:839.7px;width:75px;height:34.500px;background:#4b566c;border:2px solid #2b313d;border-radius:4.500px"></div>
<svg style="left:2932px;top:844.7px" width="32" height="26" viewBox="0 0 32 26"><path d="M12,13 h17 l-10,9 h-17 Z" fill="#dcdcdc" stroke="#3b4453" stroke-width="1.3"/><path d="M12,7 h17 l-10,9 h-17 Z" fill="#dcdcdc" stroke="#3b4453" stroke-width="1.3"/><path d="M12,1 h17 l-10,9 h-17 Z" fill="#8fc4f7" stroke="#3b4453" stroke-width="1.3"/></svg>
<svg style="left:2973px;top:851.9000000000001px" width="14" height="10"><path d="M0,0 h13.500 l-6.750,9 Z" fill="#d9dbde"/></svg>
<div class="t" style="right:264px;top:891.9px;font-size:21.500px;color:#d6d9dd;font-weight:500">文字样式</div>
<div class="abs" style="left:2782px;top:885.7px;width:214px;height:34.500px;background:#4b566c;border:2px solid #2b313d;border-radius:4.500px"></div>
<div class="t" style="left:2794px;top:891.9px;font-size:22.400px;color:#f4f4f4;-webkit-text-stroke:.35px #f4f4f4">Standard</div>
<svg style="left:2975px;top:897.94px" width="14" height="10"><path d="M0,0 h13.500 l-6.750,9 Z" fill="#d9dbde"/></svg>
<div class="t" style="right:264px;top:938.0px;font-size:21.500px;color:#d6d9dd;font-weight:500">标注样式</div>
<div class="abs" style="left:2782px;top:931.8px;width:214px;height:34.500px;background:#4b566c;border:2px solid #2b313d;border-radius:4.500px"></div>
<div class="t" style="left:2794px;top:938.0px;font-size:22.400px;color:#f4f4f4;-webkit-text-stroke:.35px #f4f4f4">ISO-25</div>
<svg style="left:2975px;top:943.98px" width="14" height="10"><path d="M0,0 h13.500 l-6.750,9 Z" fill="#d9dbde"/></svg>
<div class="t" style="right:264px;top:984.0px;font-size:21.500px;color:#d6d9dd;font-weight:500">多重引线样式</div>
<div class="abs" style="left:2782px;top:977.8px;width:214px;height:34.500px;background:#4b566c;border:2px solid #2b313d;border-radius:4.500px"></div>
<div class="t" style="left:2794px;top:984.0px;font-size:22.400px;color:#f4f4f4;-webkit-text-stroke:.35px #f4f4f4">Standard</div>
<svg style="left:2975px;top:990.02px" width="14" height="10"><path d="M0,0 h13.500 l-6.750,9 Z" fill="#d9dbde"/></svg>
<div class="t" style="right:264px;top:1030.1px;font-size:21.500px;color:#d6d9dd;font-weight:500">表格样式</div>
<div class="abs" style="left:2782px;top:1023.9px;width:214px;height:34.500px;background:#4b566c;border:2px solid #2b313d;border-radius:4.500px"></div>
<div class="t" style="left:2794px;top:1030.1px;font-size:22.400px;color:#f4f4f4;-webkit-text-stroke:.35px #f4f4f4">Standard</div>
<svg style="left:2975px;top:1036.06px" width="14" height="10"><path d="M0,0 h13.500 l-6.750,9 Z" fill="#d9dbde"/></svg>
<div class="t" style="right:264px;top:1076.1px;font-size:21.500px;color:#d6d9dd;font-weight:500">注释比例</div>
<div class="abs" style="left:2782px;top:1069.9px;width:214px;height:34.500px;background:#4b566c;border:2px solid #2b313d;border-radius:4.500px"></div>
<div class="t" style="left:2794px;top:1076.1px;font-size:22.400px;color:#f4f4f4;-webkit-text-stroke:.35px #f4f4f4">1:1</div>
<svg style="left:2975px;top:1082.1px" width="14" height="10"><path d="M0,0 h13.500 l-6.750,9 Z" fill="#d9dbde"/></svg>
<div class="t" style="right:264px;top:1122.1px;font-size:21.500px;color:#d6d9dd;font-weight:500">文字高度</div>
<div class="abs" style="left:2782px;top:1115.9px;width:169px;height:34.500px;background:#4b566c;border:2px solid #2b313d;border-radius:4.500px"></div>
<div class="t" style="left:2788px;top:1123.1px;font-size:22.400px;color:#f4f4f4;-webkit-text-stroke:.35px #f4f4f4">2.5</div>
<svg style="left:2958px;top:1114.9px" width="36" height="36" viewBox="0 0 36 36"><path d="M3,2 v27 M32,2 v10" stroke="#e0e0e0" stroke-width="2"/><path d="M8,6 h20" stroke="#8fc4f7" stroke-width="2"/><path d="M6,6 l5,-3.500 v7 Z M30,6 l-5,-3.500 v7 Z" fill="#8fc4f7"/><path d="M25,14 v18 M16,23 h18" stroke="#f0f0f0" stroke-width="2.400"/><rect x="21.500" y="19.500" width="7" height="7" fill="none" stroke="#f0f0f0" stroke-width="1.800"/></svg>
<div class="t" style="right:264px;top:1168.2px;font-size:21.500px;color:#d6d9dd;font-weight:500">打印样式</div>
<div class="abs" style="left:2782px;top:1162.0px;width:214px;height:34.500px;background:#4b566c;border:2px solid #2b313d;border-radius:4.500px"></div>
<div class="t" style="left:2794px;top:1168.2px;font-size:22.400px;color:#f4f4f4;-webkit-text-stroke:.35px #f4f4f4">ByColor</div>
<svg style="left:2975px;top:1174.18px" width="14" height="10"><path d="M0,0 h13.500 l-6.750,9 Z" fill="#d9dbde"/></svg>
<div class="t" style="right:264px;top:1214.2px;font-size:21.500px;color:#d6d9dd;font-weight:500">打印样式表</div>
<div class="abs" style="left:2782px;top:1208.0px;width:214px;height:34.500px;background:#4b566c;border:2px solid #2b313d;border-radius:4.500px"></div>
<div class="t" style="left:2794px;top:1214.2px;font-size:22.400px;color:#f4f4f4;-webkit-text-stroke:.35px #f4f4f4">无</div>
<svg style="left:2975px;top:1220.22px" width="14" height="10"><path d="M0,0 h13.500 l-6.750,9 Z" fill="#d9dbde"/></svg>
<div class="t" style="right:254px;top:1260.3px;font-size:21.500px;color:#d6d9dd;font-weight:500">打印样式附着到</div>
<div class="abs" style="left:2782px;top:1254.1px;width:214px;height:34.500px;background:#434d5f;border:1.500px solid #3c4556;border-radius:4px"></div>
<div class="t" style="left:2788px;top:1261.8px;font-size:21px;color:#7f858f">模型</div>
<div class="t" style="right:264px;top:1306.3px;font-size:21.500px;color:#d6d9dd;font-weight:500">打印表类型</div>
<div class="abs" style="left:2782px;top:1300.1px;width:214px;height:34.500px;background:#434d5f;border:1.500px solid #3c4556;border-radius:4px"></div>
<div class="t" style="left:2788px;top:1307.8px;font-size:21px;color:#7f858f">不可用</div>
<div class="abs" style="left:2716px;top:1390px;width:260px;height:76px;background:#f3f8ff;border:2.500px solid #3d8bf2;border-radius:16px;overflow:hidden"><div class="abs" style="left:-1px;top:-1px;width:73px;height:74px;background:linear-gradient(45deg,#56a5fb,#3a86f0);border-radius:0 12px 12px 0"></div></div>
<svg style="left:2732px;top:1408px" width="44" height="36" viewBox="0 0 44 36"><circle cx="22" cy="11" r="7" fill="none" stroke="#fff" stroke-width="5.500"/><circle cx="11" cy="23" r="7" fill="none" stroke="#fff" stroke-width="5.500"/><circle cx="33" cy="23" r="7" fill="none" stroke="#fff" stroke-width="5.500"/><rect x="11" y="25" width="22" height="7.800" fill="#fff"/><circle cx="22" cy="21" r="5" fill="#fff"/></svg>
<div class="t" style="left:2805px;top:1415px;font-size:25.700px;font-weight:bold;color:#3f8ef5">拖拽至此上传</div>
<div class="abs" style="left:368px;top:1686px;width:2656px;height:48px;background:#272d39"></div>
<div class="abs" style="left:370px;top:1689px;width:118px;height:43px;background:linear-gradient(#54627a,#46526a)"></div>
<div class="abs" style="left:490px;top:1689px;width:44px;height:43px;background:#3d4657"></div>
<div class="abs" style="left:536px;top:1689px;width:116px;height:43px;background:#3d4657"></div>
<div class="abs" style="left:654px;top:1689px;width:116px;height:43px;background:#3d4657"></div>
<div class="abs" style="left:772px;top:1689px;width:1187px;height:43px;background:#3a4353"></div>
<div class="abs" style="left:1961px;top:1689px;width:1063px;height:43px;background:#3a4353"></div>
<div class="t" style="left:404px;top:1697px;font-size:22px;font-weight:bold;color:#f0f0f0">模型</div>
<svg style="left:501px;top:1700px" width="24" height="24"><path d="M11,0 v22 M0,11 h22" stroke="#e8e8e8" stroke-width="2.200"/></svg>
<div class="t" style="left:565px;top:1697px;font-size:22px;color:#a9aeb6;font-weight:500">布局1</div>
<div class="t" style="left:683px;top:1697px;font-size:22px;color:#a9aeb6;font-weight:500">布局2</div>
<div class="t" style="left:1975px;top:1699px;font-size:23.600px;color:#b5b9c0;letter-spacing:.05px">2614.3358, 1577.0294, 0.0000</div>
<div class="abs" style="left:2302px;top:1690px;width:40px;height:39px;background:#5a7fb5"></div>
<div class="abs" style="left:2478px;top:1690px;width:40px;height:39px;background:#5a7fb5"></div>
<div class="abs" style="left:2566px;top:1690px;width:40px;height:39px;background:#5a7fb5"></div>
<div class="abs" style="left:2610px;top:1690px;width:40px;height:39px;background:#5a7fb5"></div>
<div class="abs" style="left:2654px;top:1690px;width:40px;height:39px;background:#5a7fb5"></div>
<div class="abs" style="left:2698px;top:1690px;width:40px;height:39px;background:#5a7fb5"></div>
<div class="abs" style="left:2742px;top:1690px;width:40px;height:39px;background:#5a7fb5"></div>
<svg style="left:2302px;top:1690px" width="40" height="39" viewBox="0 0 40 39"><path d="M12,5 v30 M20,5 v30 M28,5 v30 M5,12 h30 M5,20 h30 M5,28 h30" stroke="#e6e6e6" stroke-width="2.200"/></svg>
<svg style="left:2346px;top:1690px" width="40" height="39" viewBox="0 0 40 39"><rect x="8" y="7" width="4.500" height="4.500" fill="#e6e6e6"/><rect x="8" y="17" width="4.500" height="4.500" fill="#e6e6e6"/><rect x="8" y="27" width="4.500" height="4.500" fill="#e6e6e6"/><rect x="18" y="7" width="4.500" height="4.500" fill="#e6e6e6"/><rect x="18" y="17" width="4.500" height="4.500" fill="#e6e6e6"/><rect x="18" y="27" width="4.500" height="4.500" fill="#e6e6e6"/><rect x="28" y="7" width="4.500" height="4.500" fill="#e6e6e6"/><rect x="28" y="17" width="4.500" height="4.500" fill="#e6e6e6"/><rect x="28" y="27" width="4.500" height="4.500" fill="#e6e6e6"/></svg>
<svg style="left:2390px;top:1690px" width="40" height="39" viewBox="0 0 40 39"><path d="M7,4 v31 h30 M7,25 h11 v10" fill="none" stroke="#e6e6e6" stroke-width="2.200"/></svg>
<svg style="left:2434px;top:1690px" width="40" height="39" viewBox="0 0 40 39"><circle cx="18" cy="22" r="12" fill="none" stroke="#e6e6e6" stroke-width="2.200"/><path d="M18,22 L33,7 M18,22 H37" stroke="#e6e6e6" stroke-width="2.200"/></svg>
<svg style="left:2478px;top:1690px" width="40" height="39" viewBox="0 0 40 39"><path d="M11,6 v16 M3,14 h16" stroke="#e6e6e6" stroke-width="2.400"/><rect x="17" y="25" width="20" height="7" fill="#e6e6e6"/></svg>
<svg style="left:2522px;top:1690px" width="40" height="39" viewBox="0 0 40 39"><path d="M5,9 h32 M5,17 h32 M5,26 h32" stroke="#e6e6e6" stroke-width="2.200"/><rect x="5" y="17" width="14" height="5" fill="#e6e6e6"/><rect x="5" y="26" width="19" height="6" fill="#e6e6e6"/><rect x="5" y="9" width="10" height="4" fill="#e6e6e6"/></svg>
<svg style="left:2566px;top:1690px" width="40" height="39" viewBox="0 0 40 39"><rect x="7" y="6" width="27" height="27" fill="none" stroke="#e6e6e6" stroke-width="2.400"/><rect x="10.0" y="9.0" width="4.200" height="4.200" fill="#e6e6e6"/><rect x="10.0" y="17.4" width="4.200" height="4.200" fill="#e6e6e6"/><rect x="10.0" y="25.8" width="4.200" height="4.200" fill="#e6e6e6"/><rect x="14.2" y="13.2" width="4.200" height="4.200" fill="#e6e6e6"/><rect x="14.2" y="21.6" width="4.200" height="4.200" fill="#e6e6e6"/><rect x="18.4" y="9.0" width="4.200" height="4.200" fill="#e6e6e6"/><rect x="18.4" y="17.4" width="4.200" height="4.200" fill="#e6e6e6"/><rect x="18.4" y="25.8" width="4.200" height="4.200" fill="#e6e6e6"/><rect x="22.6" y="13.2" width="4.200" height="4.200" fill="#e6e6e6"/><rect x="22.6" y="21.6" width="4.200" height="4.200" fill="#e6e6e6"/><rect x="26.8" y="9.0" width="4.200" height="4.200" fill="#e6e6e6"/><rect x="26.8" y="17.4" width="4.200" height="4.200" fill="#e6e6e6"/><rect x="26.8" y="25.8" width="4.200" height="4.200" fill="#e6e6e6"/></svg>
<svg style="left:2610px;top:1690px" width="40" height="39" viewBox="0 0 40 39"><path d="M11,5 h-5 v26 h5 M23,5 h5 v14" fill="none" stroke="#e6e6e6" stroke-width="2.200"/><rect x="11" y="9" width="11" height="9" fill="none" stroke="#e6e6e6" stroke-width="2"/><circle cx="16" cy="24" r="4.500" fill="#c9ccd1"/><path d="M24,20 v16 l4,-4 l3,6 l3,-1.500 l-3,-6 h5 Z" fill="#c9ccd1"/></svg>
<svg style="left:2654px;top:1690px" width="40" height="39" viewBox="0 0 40 39"><path d="M5,33 L34,8 M5,33 H36" stroke="#e6e6e6" stroke-width="2.200"/><circle cx="19" cy="21" r="3.500" fill="#e6e6e6"/></svg>
<svg style="left:2698px;top:1690px" width="40" height="39" viewBox="0 0 40 39"><rect x="5" y="5" width="8" height="8" fill="none" stroke="#e6e6e6" stroke-width="2"/><path d="M13,9 h14 M9,13 v22 h27 v-10" fill="none" stroke="#e6e6e6" stroke-width="2.200"/></svg>
<svg style="left:2742px;top:1690px" width="40" height="39" viewBox="0 0 40 39"><path d="M20,5 l3,10 l9,20 l-8,-5 h-8 l-8,5 l9,-20 Z" fill="#d6d8dc"/><circle cx="29" cy="11" r="5" fill="#d6d8dc"/></svg>
<svg style="left:2786px;top:1690px" width="40" height="39" viewBox="0 0 40 39"><path d="M20,5 l3,10 l9,20 l-8,-5 h-8 l-8,5 l9,-20 Z" fill="#d6d8dc"/><path d="M30,3 l-6,8 h4 l-2,6 l7,-9 h-4 Z" fill="#f2c867"/></svg>
<svg style="left:2832px;top:1690px" width="40" height="39" viewBox="0 0 40 39"><path d="M20,5 l3,10 l9,20 l-8,-5 h-8 l-8,5 l9,-20 Z" fill="#d6d8dc"/></svg>
<div class="t" style="left:2870px;top:1708px;font-size:13px;color:#c9ccd1">1:1</div>
<svg style="left:2900px;top:1690px" width="40" height="39" viewBox="0 0 40 39"><path d="M8,20 l6,6 l12,-14" fill="none" stroke="#c9ccd1" stroke-width="3"/></svg>
<svg style="left:2940px;top:1690px" width="40" height="39" viewBox="0 0 40 39"><rect x="8" y="6" width="9" height="9" fill="none" stroke="#c9ccd1" stroke-width="2"/><circle cx="28" cy="18" r="5" fill="none" stroke="#c9ccd1" stroke-width="2"/><path d="M12,34 l5,-9 l5,9 Z" fill="none" stroke="#c9ccd1" stroke-width="2"/></svg>
<svg style="left:2974px;top:1690px" width="40" height="39" viewBox="0 0 40 39"><g transform="translate(20,20)"><rect x="-3.500" y="-15" width="7" height="8" fill="#d6d8dc" transform="rotate(0)"/><rect x="-3.500" y="-15" width="7" height="8" fill="#d6d8dc" transform="rotate(45)"/><rect x="-3.500" y="-15" width="7" height="8" fill="#d6d8dc" transform="rotate(90)"/><rect x="-3.500" y="-15" width="7" height="8" fill="#d6d8dc" transform="rotate(135)"/><rect x="-3.500" y="-15" width="7" height="8" fill="#d6d8dc" transform="rotate(180)"/><rect x="-3.500" y="-15" width="7" height="8" fill="#d6d8dc" transform="rotate(225)"/><rect x="-3.500" y="-15" width="7" height="8" fill="#d6d8dc" transform="rotate(270)"/><rect x="-3.500" y="-15" width="7" height="8" fill="#d6d8dc" transform="rotate(315)"/><circle r="10" fill="#d6d8dc"/><circle r="4.500" fill="#3a4353"/></g></svg>
<div class="t" style="left:2722px;top:1683.500px;font-size:43px;color:#d0d0d0;opacity:.68;font-family:'Liberation Mono',monospace;transform:scaleX(.885);transform-origin:0 0;-webkit-text-stroke:1.1px #d0d0d0">dooooit@</div>
<div class="t" style="left:2914px;top:1686px;font-size:36px;letter-spacing:7px;color:#d0d0d0;opacity:.68;font-family:'Liberation Serif','Noto Serif CJK SC',serif;font-weight:600">小柒</div>
</div>
</body></html>
